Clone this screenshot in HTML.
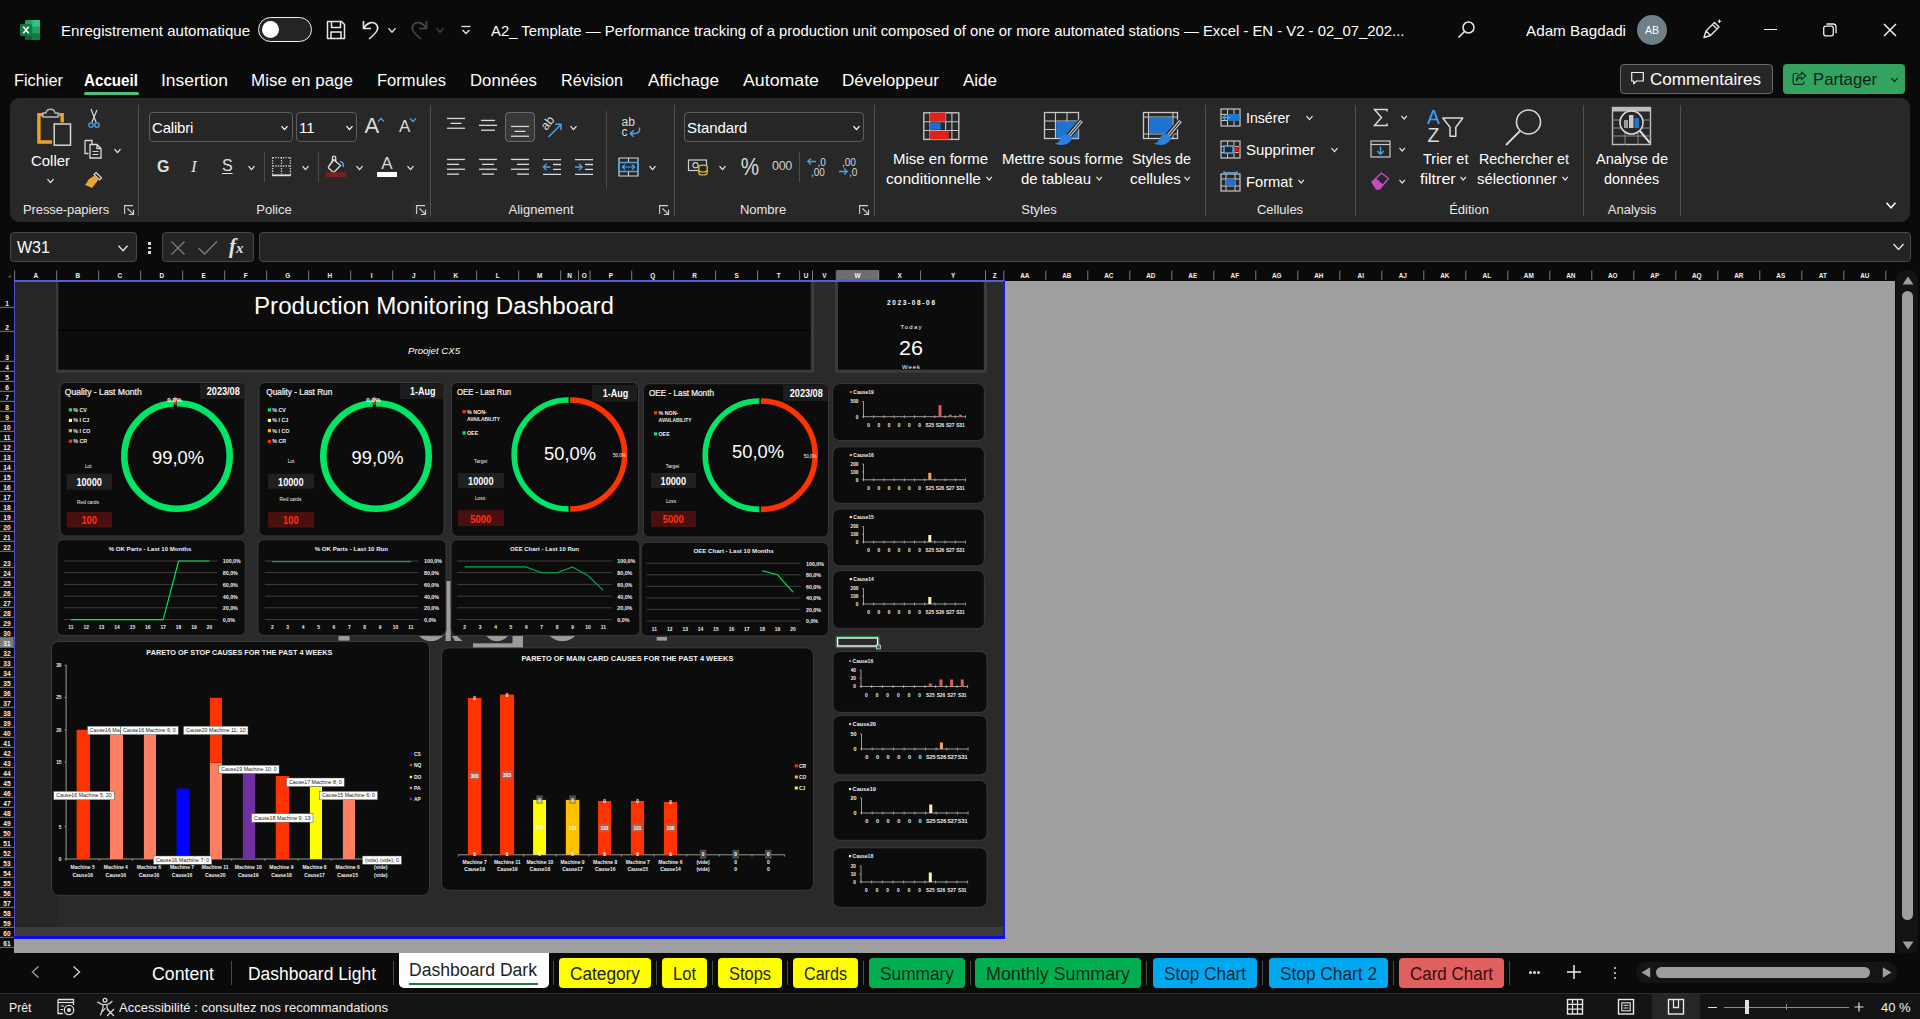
<!DOCTYPE html>
<html lang="fr"><head><meta charset="utf-8"><title>Excel</title>
<style>
html,body{margin:0;padding:0;background:#0a0a0a;overflow:hidden}
body{width:1920px;height:1019px;position:relative;font-family:"Liberation Sans",sans-serif}
.a{position:absolute}
.t{white-space:nowrap;transform-origin:left center}
svg{overflow:visible}
svg text{font-family:"Liberation Sans",sans-serif}
</style></head><body>
<div class="a" style="left:0;top:0;width:1920px;height:100px;background:#0a0a0a"></div>
<svg class="a" style="left:19px;top:19px" width="22" height="22" viewBox="0 0 22 22"><rect x="6" y="1" width="15" height="20" rx="1.5" fill="#21a366"/><rect x="13.5" y="1" width="7.5" height="6.7" fill="#33c481"/><rect x="6" y="7.7" width="7.5" height="6.6" fill="#107c41"/><rect x="13.5" y="7.7" width="7.5" height="6.6" fill="#21a366"/><rect x="6" y="14.3" width="7.5" height="6.7" fill="#185c37"/><rect x="13.5" y="14.3" width="7.5" height="6.7" rx="1" fill="#107c41"/><rect x="1" y="5" width="12" height="12" rx="1.2" fill="#107c41"/><path d="M4.3 7.8 L9.7 14.2 M9.7 7.8 L4.3 14.2" stroke="#fff" stroke-width="1.6"/></svg>
<div class="a t" style="transform:scaleX(1.0030);left:61px;top:15.5px;height:30px;line-height:30px;font-size:15px;color:#fff">Enregistrement automatique</div>
<div class="a" style="left:258px;top:17px;width:54px;height:25px;border-radius:13px;border:1.5px solid #f0f0f0;background:#242424;box-sizing:border-box"></div>
<div class="a" style="left:262px;top:21px;width:17px;height:17px;border-radius:9px;background:#fff"></div>
<svg class="a" style="left:325px;top:19px" width="22" height="22" viewBox="0 0 22 22"><path d="M2.5 2.5 H16.5 L19.5 5.5 V19.5 H2.5 Z" fill="none" stroke="#e8e8e8" stroke-width="1.5" stroke-linejoin="round"/><path d="M6.5 2.5 V8.5 H15.5 V2.5" fill="none" stroke="#e8e8e8" stroke-width="1.5"/><path d="M6 19.5 V13 H16 V19.5" fill="none" stroke="#e8e8e8" stroke-width="1.5"/></svg>
<svg class="a" style="left:360px;top:18px" width="22" height="24" viewBox="0 0 22 24"><path d="M3.5 3 V10.5 H11" fill="none" stroke="#e8e8e8" stroke-width="1.6"/><path d="M3.8 10.2 C7 4.5 13 3 16.2 6.3 C19.5 10 18 13.5 9 21" fill="none" stroke="#e8e8e8" stroke-width="1.6"/></svg>
<svg class="a" style="left:387px;top:26px" width="10" height="8" viewBox="-5 -4 10 8"><path d="M-3.5 -1.7 L0 2.3 L3.5 -1.7" fill="none" stroke="#e0e0e0" stroke-width="1.3"/></svg>
<svg class="a" style="left:408px;top:18px" width="22" height="24" viewBox="0 0 22 24"><path d="M18.5 3 V10.5 H11" fill="none" stroke="#4a4a4a" stroke-width="1.6"/><path d="M18.2 10.2 C15 4.5 9 3 5.800000000000001 6.3 C2.5 10 4 13.5 13 21" fill="none" stroke="#4a4a4a" stroke-width="1.6"/></svg>
<svg class="a" style="left:435px;top:26px" width="10" height="8" viewBox="-5 -4 10 8"><path d="M-3.5 -1.7 L0 2.3 L3.5 -1.7" fill="none" stroke="#4a4a4a" stroke-width="1.3"/></svg>
<svg class="a" style="left:460px;top:24px" width="12" height="12" viewBox="0 0 12 12"><path d="M1.5 2.5 H10.5" stroke="#e8e8e8" stroke-width="1.3"/><path d="M2.5 6 L6 9.5 L9.5 6" fill="none" stroke="#e8e8e8" stroke-width="1.3"/></svg>
<div class="a t" style="transform:scaleX(0.9909);left:491px;top:15.5px;height:30px;line-height:30px;font-size:15px;color:#fff">A2_ Template — Performance tracking of a production unit composed of one or more automated stations — Excel - EN - V2 - 02_07_202...</div>
<svg class="a" style="left:1456px;top:19px" width="22" height="22" viewBox="0 0 22 22"><circle cx="12.5" cy="8.5" r="5.5" fill="none" stroke="#e8e8e8" stroke-width="1.5"/><path d="M8.5 12.5 L2.5 18.5" stroke="#e8e8e8" stroke-width="1.6"/></svg>
<div class="a t" style="transform:scaleX(1.0162);left:1526px;top:15.5px;height:30px;line-height:30px;font-size:15px;color:#fff">Adam Bagdadi</div>
<div class="a" style="left:1637px;top:15px;width:30px;height:30px;border-radius:15px;background:#6e7f88"></div>
<div class="a t" style="left:1632.0px;width:40px;text-align:center;top:20.0px;height:21.0px;line-height:21.0px;font-size:10.5px;color:#fff;">AB</div>
<svg class="a" style="left:1700px;top:18px" width="24" height="24" viewBox="0 0 24 24"><path d="M4 19.5 L6 13 L14.5 4.5 L19 9 L10.5 17.5 Z M6 13 L10.5 17.5 M12.5 6.5 L17 11" fill="none" stroke="#e8e8e8" stroke-width="1.4" stroke-linejoin="round"/><path d="M19.5 1.5 V5 M17.8 3.2 H21.2" stroke="#e8e8e8" stroke-width="1.1"/></svg>
<div class="a" style="left:1763.5px;top:28.8px;width:13px;height:1.3px;background:#f0f0f0"></div>
<svg class="a" style="left:1822px;top:22px" width="16" height="16" viewBox="0 0 16 16"><rect x="1.7" y="4.2" width="9.6" height="9.6" rx="2" fill="none" stroke="#f0f0f0" stroke-width="1.3"/><path d="M4.5 2 H11 Q14 2 14 5 V11.3" fill="none" stroke="#f0f0f0" stroke-width="1.3"/></svg>
<svg class="a" style="left:1882px;top:22px" width="16" height="16" viewBox="0 0 16 16"><path d="M2 2 L14 14 M14 2 L2 14" stroke="#f0f0f0" stroke-width="1.5"/></svg>
<div class="a t" style="transform:scaleX(0.9730);left:14px;top:63.5px;height:34px;line-height:34px;font-size:16.8px;color:#fff;white-space:nowrap">Fichier</div>
<div class="a t" style="transform:scaleX(0.9045);left:84px;top:63.5px;height:34px;line-height:34px;font-size:16.8px;color:#fff;font-weight:bold;white-space:nowrap">Accueil</div>
<div class="a t" style="transform:scaleX(1.0408);left:161px;top:63.5px;height:34px;line-height:34px;font-size:16.8px;color:#fff;white-space:nowrap">Insertion</div>
<div class="a t" style="transform:scaleX(1.0122);left:251px;top:63.5px;height:34px;line-height:34px;font-size:16.8px;color:#fff;white-space:nowrap">Mise en page</div>
<div class="a t" style="transform:scaleX(0.9866);left:377px;top:63.5px;height:34px;line-height:34px;font-size:16.8px;color:#fff;white-space:nowrap">Formules</div>
<div class="a t" style="transform:scaleX(0.9972);left:470px;top:63.5px;height:34px;line-height:34px;font-size:16.8px;color:#fff;white-space:nowrap">Données</div>
<div class="a t" style="transform:scaleX(0.9633);left:561px;top:63.5px;height:34px;line-height:34px;font-size:16.8px;color:#fff;white-space:nowrap">Révision</div>
<div class="a t" style="transform:scaleX(1.0191);left:648px;top:63.5px;height:34px;line-height:34px;font-size:16.8px;color:#fff;white-space:nowrap">Affichage</div>
<div class="a t" style="transform:scaleX(1.0579);left:743px;top:63.5px;height:34px;line-height:34px;font-size:16.8px;color:#fff;white-space:nowrap">Automate</div>
<div class="a t" style="transform:scaleX(1.0192);left:842px;top:63.5px;height:34px;line-height:34px;font-size:16.8px;color:#fff;white-space:nowrap">Développeur</div>
<div class="a t" style="transform:scaleX(1.0121);left:963px;top:63.5px;height:34px;line-height:34px;font-size:16.8px;color:#fff;white-space:nowrap">Aide</div>
<div class="a" style="left:84px;top:92px;width:55px;height:3px;border-radius:1.5px;background:#4fbe7c"></div>
<div class="a" style="left:1620px;top:64px;width:153px;height:30px;border-radius:4px;border:1px solid #6a6a6a;background:#262626;box-sizing:border-box"></div>
<svg class="a" style="left:1630px;top:70px" width="16" height="16" viewBox="0 0 16 16"><path d="M1.7 2.5 H13.3 V11 H6.5 L3.7 13.8 V11 H1.7 Z" fill="none" stroke="#f0f0f0" stroke-width="1.2" stroke-linejoin="round"/></svg>
<div class="a t" style="transform:scaleX(1.0041);left:1650px;top:63px;height:34px;line-height:34px;font-size:17px;color:#fff">Commentaires</div>
<div class="a" style="left:1783px;top:64px;width:122px;height:30px;border-radius:4px;background:#33a35f"></div>
<svg class="a" style="left:1791px;top:70px" width="17" height="17" viewBox="0 0 17 17"><path d="M7 3.5 H3.5 Q2.2 3.5 2.2 4.8 V13 Q2.2 14.3 3.5 14.3 H11.5 Q12.8 14.3 12.8 13 V11.5" fill="none" stroke="#10331f" stroke-width="1.2"/><path d="M10.5 2 L14.8 5.8 L10.5 9.6 V7.3 Q7 7.3 5.5 10.8 Q5.5 4.6 10.5 4.3 Z" fill="none" stroke="#10331f" stroke-width="1.2" stroke-linejoin="round"/></svg>
<div class="a t" style="transform:scaleX(0.9815);left:1813px;top:63px;height:34px;line-height:34px;font-size:17px;color:#0c2416">Partager</div>
<svg class="a" style="left:1889.5px;top:75.5px" width="9.0" height="7.0" viewBox="-4.5 -3.5 9.0 7.0"><path d="M-3.0 -1.45 L0 2.05 L3.0 -1.45" fill="none" stroke="#0c2416" stroke-width="1.3"/></svg>
<div class="a" style="left:10px;top:98px;width:1900px;height:124px;border-radius:9px;background:#282828"></div>
<div class="a" style="left:138px;top:105px;width:1px;height:111px;background:#505050"></div>
<div class="a" style="left:430px;top:105px;width:1px;height:111px;background:#505050"></div>
<div class="a" style="left:673.5px;top:105px;width:1px;height:111px;background:#505050"></div>
<div class="a" style="left:873.5px;top:105px;width:1px;height:111px;background:#505050"></div>
<div class="a" style="left:1205px;top:105px;width:1px;height:111px;background:#505050"></div>
<div class="a" style="left:1355px;top:105px;width:1px;height:111px;background:#505050"></div>
<div class="a" style="left:1583px;top:105px;width:1px;height:111px;background:#505050"></div>
<div class="a" style="left:1680px;top:105px;width:1px;height:111px;background:#505050"></div>
<svg class="a" style="left:33px;top:104px" width="42" height="44" viewBox="0 0 42 44"><path d="M12 10.6 H5.9 V38 H19" fill="none" stroke="#eda02a" stroke-width="3.4"/><path d="M26 10.6 H29.2 V18.5" fill="none" stroke="#eda02a" stroke-width="3.4"/><path d="M10 13 V9 H13 Q13.5 5.2 17.5 5.2 Q21.5 5.2 22 9 H25 V13 Z" fill="#282828" stroke="#b8b8b8" stroke-width="1.4"/><rect x="21.2" y="20" width="16.3" height="21.2" fill="#282828" stroke="#d4d4d4" stroke-width="1.5"/></svg>
<div class="a t" style="transform:scaleX(0.9952);left:31px;top:145.5px;height:30px;line-height:30px;font-size:15px;color:#fff">Coller</div>
<svg class="a" style="left:45.5px;top:176.5px" width="9.0" height="7.0" viewBox="-4.5 -3.5 9.0 7.0"><path d="M-3.0 -1.45 L0 2.05 L3.0 -1.45" fill="none" stroke="#e6e6e6" stroke-width="1.3"/></svg>
<svg class="a" style="left:84px;top:107.5px" width="20" height="22" viewBox="0 0 20 22"><path d="M7 1 L12.2 14.5 M13 2 L7.8 14.5" stroke="#d8d8d8" stroke-width="1.2"/><circle cx="7" cy="17" r="2.2" fill="none" stroke="#4aa3e8" stroke-width="1.3"/><circle cx="13" cy="17" r="2.2" fill="none" stroke="#4aa3e8" stroke-width="1.3"/></svg>
<svg class="a" style="left:83px;top:138px" width="22" height="22" viewBox="0 0 22 22"><path d="M2 2.5 H9 V6 M2 2.5 V15.5 H5.5" fill="none" stroke="#d8d8d8" stroke-width="1.3"/><path d="M7 6.5 H14 L18 10.5 V20 H7 Z M14 6.5 V10.5 H18" fill="none" stroke="#d8d8d8" stroke-width="1.3"/><path d="M9.5 13.5 H15.5 M9.5 16.5 H15.5" stroke="#d8d8d8" stroke-width="1"/></svg>
<svg class="a" style="left:112.5px;top:146.5px" width="9.0" height="7.0" viewBox="-4.5 -3.5 9.0 7.0"><path d="M-3.0 -1.45 L0 2.05 L3.0 -1.45" fill="none" stroke="#e6e6e6" stroke-width="1.3"/></svg>
<svg class="a" style="left:83px;top:170px" width="22" height="22" viewBox="0 0 22 22"><path d="M13 2.5 L18.5 8 L16.5 10 L11 4.5 Z" fill="none" stroke="#d8d8d8" stroke-width="1.2"/><path d="M11.5 6 L15 9.5 L9 17.5 L2.5 14.5 Q5 13 5.5 10 Z" fill="#e8a735" stroke="#e8a735" stroke-width="1" stroke-linejoin="round"/></svg>
<div class="a t pp" style="left:23px;top:196.7px;height:26px;line-height:26px;font-size:13px;color:#e6e6e6;letter-spacing:-0.1px">Presse-papiers</div>
<svg class="a" style="left:124px;top:205px" width="11" height="11" viewBox="0 0 11 11"><path d="M0.6 9 V0.6 H9" fill="none" stroke="#d0d0d0" stroke-width="1.1"/><path d="M3.5 3.5 L9.2 9.2 M9.5 4.8 V9.5 H4.8" fill="none" stroke="#d0d0d0" stroke-width="1.2"/></svg>
<div class="a" style="left:149px;top:112px;width:144px;height:30px;border:1px solid #5e5e5e;border-radius:4px;background:#262626;box-sizing:border-box"></div>
<div class="a t " style="left:152px;top:112.5px;height:30px;line-height:30px;font-size:15px;color:#fff;letter-spacing:-0.2px">Calibri</div>
<svg class="a" style="left:280.0px;top:124.0px" width="9.0" height="7.0" viewBox="-4.5 -3.5 9.0 7.0"><path d="M-3.0 -1.45 L0 2.05 L3.0 -1.45" fill="none" stroke="#fff" stroke-width="1.3"/></svg>
<div class="a" style="left:296px;top:112px;width:61px;height:30px;border:1px solid #5e5e5e;border-radius:4px;background:#262626;box-sizing:border-box"></div>
<div class="a t " style="left:299px;top:112.5px;height:30px;line-height:30px;font-size:15px;color:#fff;">11</div>
<svg class="a" style="left:344.5px;top:124.0px" width="9.0" height="7.0" viewBox="-4.5 -3.5 9.0 7.0"><path d="M-3.0 -1.45 L0 2.05 L3.0 -1.45" fill="none" stroke="#fff" stroke-width="1.3"/></svg>
<div class="a t " style="left:364.5px;top:103.5px;height:44px;line-height:44px;font-size:22px;color:#dcdcdc;">A</div>
<svg class="a" style="left:377px;top:117px" width="8" height="6" viewBox="0 0 8 6"><path d="M1 4.5 L4 1.5 L7 4.5" fill="none" stroke="#4aa3e8" stroke-width="1.3"/></svg>
<div class="a t " style="left:399px;top:110.3px;height:34px;line-height:34px;font-size:17px;color:#dcdcdc;">A</div>
<svg class="a" style="left:409px;top:117px" width="8" height="6" viewBox="0 0 8 6"><path d="M1 1.5 L4 4.5 L7 1.5" fill="none" stroke="#4aa3e8" stroke-width="1.3"/></svg>
<div class="a t " style="left:157px;top:150.5px;height:32px;line-height:32px;font-size:16px;color:#e0e0e0;font-weight:bold">G</div>
<div class="a t " style="left:191px;top:149.5px;height:34px;line-height:34px;font-size:17px;color:#e0e0e0;font-style:italic;font-family:'Liberation Serif',serif">I</div>
<div class="a t " style="left:222px;top:150px;height:32px;line-height:32px;font-size:16px;color:#e0e0e0;text-decoration:underline;text-underline-offset:2px">S</div>
<svg class="a" style="left:246.5px;top:164.0px" width="9.0" height="7.0" viewBox="-4.5 -3.5 9.0 7.0"><path d="M-3.0 -1.45 L0 2.05 L3.0 -1.45" fill="none" stroke="#e6e6e6" stroke-width="1.3"/></svg>
<div class="a" style="left:264px;top:152px;width:1px;height:30px;background:#4c4c4c"></div>
<svg class="a" style="left:271px;top:156px" width="21" height="21" viewBox="0 0 21 21"><path d="M1.6 1.6 H19.4 M1.6 1.6 V18 M19.4 1.6 V18 M10.5 1.6 V18 M1.6 10 H19.4" fill="none" stroke="#d4d4d4" stroke-width="1.3" stroke-dasharray="1.3 1.3"/><path d="M1 19.3 H20" stroke="#e0e0e0" stroke-width="1.8"/></svg>
<svg class="a" style="left:300.5px;top:164.0px" width="9.0" height="7.0" viewBox="-4.5 -3.5 9.0 7.0"><path d="M-3.0 -1.45 L0 2.05 L3.0 -1.45" fill="none" stroke="#e6e6e6" stroke-width="1.3"/></svg>
<div class="a" style="left:318px;top:152px;width:1px;height:30px;background:#4c4c4c"></div>
<svg class="a" style="left:325px;top:154px" width="24" height="24" viewBox="0 0 24 24"><path d="M8.5 5.5 L15.5 11.5 L9.5 17.8 Q8.6 18.6 7.7 17.8 L3.8 14.2 Q3 13.4 3.8 12.5 Z" fill="none" stroke="#dcdcdc" stroke-width="1.4" stroke-linejoin="round"/><path d="M10.7 8 V4.2 Q10.7 2.2 9 2.2 Q7.4 2.2 7.4 4.2 V8.8" fill="none" stroke="#dcdcdc" stroke-width="1.3"/><path d="M15 7.5 Q18.8 7.8 18.3 13.2" fill="none" stroke="#4aa3e8" stroke-width="1.7"/><rect x="1" y="18.3" width="20" height="4.7" fill="#7a2020"/></svg>
<svg class="a" style="left:354.5px;top:164.0px" width="9.0" height="7.0" viewBox="-4.5 -3.5 9.0 7.0"><path d="M-3.0 -1.45 L0 2.05 L3.0 -1.45" fill="none" stroke="#e6e6e6" stroke-width="1.3"/></svg>
<div class="a t " style="left:381.3px;top:147.3px;height:34px;line-height:34px;font-size:17px;color:#dcdcdc;">A</div>
<div class="a" style="left:377px;top:172.3px;width:20px;height:4.7px;background:#fff"></div>
<svg class="a" style="left:405.5px;top:164.0px" width="9.0" height="7.0" viewBox="-4.5 -3.5 9.0 7.0"><path d="M-3.0 -1.45 L0 2.05 L3.0 -1.45" fill="none" stroke="#e6e6e6" stroke-width="1.3"/></svg>
<div class="a t" style="left:224.0px;width:100px;text-align:center;top:196.7px;height:26px;line-height:26px;font-size:13px;color:#e6e6e6;">Police</div>
<div class="a" style="left:412px;top:201px;width:18px;height:18px;border-radius:3px;background:#2e2e2e"></div>
<svg class="a" style="left:416px;top:205px" width="11" height="11" viewBox="0 0 11 11"><path d="M0.6 9 V0.6 H9" fill="none" stroke="#d0d0d0" stroke-width="1.1"/><path d="M3.5 3.5 L9.2 9.2 M9.5 4.8 V9.5 H4.8" fill="none" stroke="#d0d0d0" stroke-width="1.2"/></svg>
<svg class="a" style="left:447.0px;top:114.65px" width="18" height="16.700000000000003" viewBox="0 0 18 16.700000000000003"><path d="M0.0 3.45 H18.0" stroke="#d8d8d8" stroke-width="1.3"/><path d="M3.5 8.350000000000001 H14.5" stroke="#d8d8d8" stroke-width="1.3"/><path d="M0.0 13.25 H18.0" stroke="#d8d8d8" stroke-width="1.3"/></svg>
<svg class="a" style="left:479.0px;top:117.25px" width="18" height="16.700000000000003" viewBox="0 0 18 16.700000000000003"><path d="M2.0 3.45 H16.0" stroke="#d8d8d8" stroke-width="1.3"/><path d="M0.0 8.350000000000001 H18.0" stroke="#d8d8d8" stroke-width="1.3"/><path d="M2.0 13.25 H16.0" stroke="#d8d8d8" stroke-width="1.3"/></svg>
<div class="a" style="left:505px;top:112px;width:30px;height:30px;border:1px solid #6a6a6a;border-radius:4px;background:#383838;box-sizing:border-box"></div>
<svg class="a" style="left:511.0px;top:122.85px" width="18" height="16.700000000000003" viewBox="0 0 18 16.700000000000003"><path d="M0.0 3.45 H18.0" stroke="#d8d8d8" stroke-width="1.3"/><path d="M3.5 8.350000000000001 H14.5" stroke="#d8d8d8" stroke-width="1.3"/><path d="M0.0 13.25 H18.0" stroke="#d8d8d8" stroke-width="1.3"/></svg>
<svg class="a" style="left:540px;top:114px" width="26" height="26" viewBox="0 0 26 26"><text x="0" y="0" font-size="12.5" fill="#dcdcdc" font-family="Liberation Sans" transform="translate(6.5 17) rotate(-52)">ab</text><path d="M8.5 23 L21 10.5 M21 16 V10.3 H15.3" fill="none" stroke="#4aa3e8" stroke-width="1.5"/></svg>
<svg class="a" style="left:568.5px;top:124.0px" width="9.0" height="7.0" viewBox="-4.5 -3.5 9.0 7.0"><path d="M-3.0 -1.45 L0 2.05 L3.0 -1.45" fill="none" stroke="#e6e6e6" stroke-width="1.3"/></svg>
<svg class="a" style="left:620px;top:115px" width="24" height="26" viewBox="0 0 24 26"><text x="1.5" y="11.2" font-size="12" fill="#dcdcdc" font-family="Liberation Sans">ab</text><text x="1.5" y="20.5" font-size="12" fill="#dcdcdc" font-family="Liberation Sans">c</text><path d="M19.5 12.5 Q20.5 18.5 15 18.5 H10.5 M13.7 15.2 L10.3 18.5 L13.7 21.8" fill="none" stroke="#4aa3e8" stroke-width="1.5"/></svg>
<svg class="a" style="left:447.0px;top:156.2px" width="18" height="21.6" viewBox="0 0 18 21.6"><path d="M0 3.45 H18" stroke="#d8d8d8" stroke-width="1.3"/><path d="M0 8.350000000000001 H12" stroke="#d8d8d8" stroke-width="1.3"/><path d="M0 13.25 H18" stroke="#d8d8d8" stroke-width="1.3"/><path d="M0 18.150000000000002 H12" stroke="#d8d8d8" stroke-width="1.3"/></svg>
<svg class="a" style="left:479.0px;top:156.2px" width="18" height="21.6" viewBox="0 0 18 21.6"><path d="M0.0 3.45 H18.0" stroke="#d8d8d8" stroke-width="1.3"/><path d="M3.0 8.350000000000001 H15.0" stroke="#d8d8d8" stroke-width="1.3"/><path d="M0.0 13.25 H18.0" stroke="#d8d8d8" stroke-width="1.3"/><path d="M3.0 18.150000000000002 H15.0" stroke="#d8d8d8" stroke-width="1.3"/></svg>
<svg class="a" style="left:511.0px;top:156.2px" width="18" height="21.6" viewBox="0 0 18 21.6"><path d="M0 3.45 H18" stroke="#d8d8d8" stroke-width="1.3"/><path d="M6 8.350000000000001 H18" stroke="#d8d8d8" stroke-width="1.3"/><path d="M0 13.25 H18" stroke="#d8d8d8" stroke-width="1.3"/><path d="M6 18.150000000000002 H18" stroke="#d8d8d8" stroke-width="1.3"/></svg>
<svg class="a" style="left:542px;top:157px" width="20" height="20" viewBox="0 0 20 20"><path d="M1 2.6 H19 M11 7.5 H19 M11 12.4 H19 M1 17.3 H19" stroke="#d8d8d8" stroke-width="1.3"/><path d="M8.5 10 H1.5 M4.5 6.8 L1.3 10 L4.5 13.2" fill="none" stroke="#4aa3e8" stroke-width="1.3"/></svg>
<svg class="a" style="left:574px;top:157px" width="20" height="20" viewBox="0 0 20 20"><path d="M1 2.6 H19 M11 7.5 H19 M11 12.4 H19 M1 17.3 H19" stroke="#d8d8d8" stroke-width="1.3"/><path d="M1 10 H8 M5 6.8 L8.2 10 L5 13.2" fill="none" stroke="#4aa3e8" stroke-width="1.3"/></svg>
<div class="a" style="left:606px;top:111px;width:1px;height:78px;background:#4c4c4c"></div>
<svg class="a" style="left:618px;top:157px" width="21" height="20" viewBox="0 0 21 20"><path d="M1 1 H20 V19 H1 Z" fill="none" stroke="#d8d8d8" stroke-width="1.2"/><rect x="1" y="5.5" width="19" height="9" fill="none" stroke="#4aa3e8" stroke-width="1.5"/><path d="M4.5 10 H16.5 M7 7.5 L4.3 10 L7 12.5 M14 7.5 L16.7 10 L14 12.5" fill="none" stroke="#4aa3e8" stroke-width="1.2"/><path d="M10.5 1 V5 M10.5 15 V19" stroke="#d8d8d8" stroke-width="1"/></svg>
<svg class="a" style="left:647.5px;top:164.0px" width="9.0" height="7.0" viewBox="-4.5 -3.5 9.0 7.0"><path d="M-3.0 -1.45 L0 2.05 L3.0 -1.45" fill="none" stroke="#e6e6e6" stroke-width="1.3"/></svg>
<div class="a t" style="left:481.0px;width:120px;text-align:center;top:196.7px;height:26px;line-height:26px;font-size:13px;color:#e6e6e6;">Alignement</div>
<svg class="a" style="left:659px;top:205px" width="11" height="11" viewBox="0 0 11 11"><path d="M0.6 9 V0.6 H9" fill="none" stroke="#d0d0d0" stroke-width="1.1"/><path d="M3.5 3.5 L9.2 9.2 M9.5 4.8 V9.5 H4.8" fill="none" stroke="#d0d0d0" stroke-width="1.2"/></svg>
<div class="a" style="left:684px;top:112px;width:180px;height:30px;border:1px solid #5e5e5e;border-radius:4px;background:#262626;box-sizing:border-box"></div>
<div class="a t " style="left:687px;top:112.5px;height:30px;line-height:30px;font-size:15px;color:#fff;letter-spacing:-0.1px">Standard</div>
<svg class="a" style="left:851.5px;top:124.0px" width="9.0" height="7.0" viewBox="-4.5 -3.5 9.0 7.0"><path d="M-3.0 -1.45 L0 2.05 L3.0 -1.45" fill="none" stroke="#fff" stroke-width="1.3"/></svg>
<svg class="a" style="left:687px;top:157px" width="24" height="20" viewBox="0 0 24 20"><rect x="1.5" y="3" width="18" height="10.5" fill="none" stroke="#cfcfcf" stroke-width="1.2"/><circle cx="8.5" cy="8.2" r="2.6" fill="none" stroke="#cfcfcf" stroke-width="1.1"/><ellipse cx="16" cy="10" rx="4.2" ry="1.8" fill="#282828" stroke="#e8c23a" stroke-width="1.2"/><path d="M11.8 10 V16 Q11.8 18 16 18 Q20.2 18 20.2 16 V10" fill="#282828" stroke="#e8c23a" stroke-width="1.2"/><path d="M11.8 13 Q11.8 15 16 15 Q20.2 15 20.2 13" fill="none" stroke="#e8c23a" stroke-width="1.1"/></svg>
<svg class="a" style="left:717.5px;top:164.0px" width="9.0" height="7.0" viewBox="-4.5 -3.5 9.0 7.0"><path d="M-3.0 -1.45 L0 2.05 L3.0 -1.45" fill="none" stroke="#e6e6e6" stroke-width="1.3"/></svg>
<div class="a t" style="left:730.0px;width:40px;text-align:center;top:143.5px;height:47.0px;line-height:47.0px;font-size:23.5px;color:#d8d8d8;transform:scaleX(0.88);transform-origin:center">%</div>
<div class="a t" style="left:762.0px;width:40px;text-align:center;top:154.0px;height:25.0px;line-height:25.0px;font-size:12.5px;color:#d0d0d0;letter-spacing:-0.3px">000</div>
<div class="a" style="left:799px;top:152px;width:1px;height:30px;background:#4c4c4c"></div>
<svg class="a" style="left:805px;top:155px" width="26" height="24" viewBox="0 0 26 24"><path d="M3 6.5 H11 M5.8 3.5 L2.8 6.5 L5.8 9.5" fill="none" stroke="#4aa3e8" stroke-width="1.3"/><text x="12.5" y="10.5" font-size="10" fill="#d8d8d8" font-family="Liberation Sans">,0</text><text x="6" y="21" font-size="10" fill="#d8d8d8" font-family="Liberation Sans">,00</text></svg>
<svg class="a" style="left:836px;top:155px" width="26" height="24" viewBox="0 0 26 24"><text x="6" y="10.5" font-size="10" fill="#d8d8d8" font-family="Liberation Sans">,00</text><path d="M3 16.5 H11 M8.2 13.5 L11.2 16.5 L8.2 19.5" fill="none" stroke="#4aa3e8" stroke-width="1.3"/><text x="13" y="21" font-size="10" fill="#d8d8d8" font-family="Liberation Sans">,0</text></svg>
<div class="a t" style="left:713.0px;width:100px;text-align:center;top:196.7px;height:26px;line-height:26px;font-size:13px;color:#e6e6e6;">Nombre</div>
<svg class="a" style="left:859px;top:205px" width="11" height="11" viewBox="0 0 11 11"><path d="M0.6 9 V0.6 H9" fill="none" stroke="#d0d0d0" stroke-width="1.1"/><path d="M3.5 3.5 L9.2 9.2 M9.5 4.8 V9.5 H4.8" fill="none" stroke="#d0d0d0" stroke-width="1.2"/></svg>
<svg class="a" style="left:922px;top:111px" width="38" height="30" viewBox="0 0 38 30"><rect x="1.8" y="1.8" width="35" height="26.6" fill="none" stroke="#c4c4c4" stroke-width="1.4"/><path d="M1.8 10.8 H36.8 M1.8 19.5 H36.8 M8 1.8 V28.4 M23.6 1.8 V28.4 M29.9 1.8 V28.4" stroke="#c4c4c4" stroke-width="1.1"/><rect x="8" y="1.6" width="15.6" height="9" fill="#de2218"/><rect x="8" y="11.6" width="10.6" height="7.2" fill="#1b6dd0"/><rect x="8" y="19.8" width="18.7" height="8.7" fill="#de2218"/></svg>
<div class="a t" style="transform:scaleX(0.9995);left:893px;top:144px;height:30px;line-height:30px;font-size:15px;color:#fff">Mise en forme</div>
<div class="a t" style="transform:scaleX(1.0354);left:886px;top:164px;height:30px;line-height:30px;font-size:15px;color:#fff">conditionnelle</div>
<svg class="a" style="left:984.8px;top:175.3px" width="8.4" height="6.4" viewBox="-4.2 -3.2 8.4 6.4"><path d="M-2.7 -1.3 L0 1.9000000000000001 L2.7 -1.3" fill="none" stroke="#e6e6e6" stroke-width="1.3"/></svg>
<svg class="a" style="left:1043px;top:110px" width="42" height="36" viewBox="0 0 42 36"><rect x="1.5" y="2.5" width="34" height="26" fill="none" stroke="#c8c8c8" stroke-width="1.3"/><path d="M1.5 11 H35.5 M1.5 19.5 H35.5 M12.5 2.5 V28.5 M24 2.5 V28.5" stroke="#c8c8c8" stroke-width="1.1"/><rect x="13.2" y="11.6" width="22" height="16.5" fill="#1f72d0"/><path d="M38.5 11 L25 27" stroke="#282828" stroke-width="6"/><path d="M38.5 11 L26 26" stroke="#d8d8d8" stroke-width="3.4"/><path d="M38 11.6 L26.5 25.4" stroke="#282828" stroke-width="1.2"/><path d="M25.5 24.5 Q18.5 23.5 17 30 Q14.5 33.5 11.5 33.5 Q22 37.5 27.5 31 Q29.5 28 28.5 26.5 Z" fill="#2b7fe0"/></svg>
<div class="a t" style="transform:scaleX(1.0010);left:1002px;top:144px;height:30px;line-height:30px;font-size:15px;color:#fff">Mettre sous forme</div>
<div class="a t" style="transform:scaleX(0.9989);left:1020.5px;top:164px;height:30px;line-height:30px;font-size:15px;color:#fff">de tableau</div>
<svg class="a" style="left:1094.8px;top:175.3px" width="8.4" height="6.4" viewBox="-4.2 -3.2 8.4 6.4"><path d="M-2.7 -1.3 L0 1.9000000000000001 L2.7 -1.3" fill="none" stroke="#e6e6e6" stroke-width="1.3"/></svg>
<svg class="a" style="left:1142px;top:110px" width="42" height="36" viewBox="0 0 42 36"><rect x="1.5" y="2.5" width="34" height="26" fill="none" stroke="#c8c8c8" stroke-width="1.3"/><path d="M1.5 7 H35.5 M1.5 24 H35.5 M6.5 2.5 V28.5 M31 2.5 V28.5" stroke="#c8c8c8" stroke-width="1.1"/><rect x="7.2" y="7.7" width="23" height="15.6" fill="#1f72d0"/><path d="M38.5 11 L25 27" stroke="#282828" stroke-width="6"/><path d="M38.5 11 L26 26" stroke="#d8d8d8" stroke-width="3.4"/><path d="M38 11.6 L26.5 25.4" stroke="#282828" stroke-width="1.2"/><path d="M25.5 24.5 Q18.5 23.5 17 30 Q14.5 33.5 11.5 33.5 Q22 37.5 27.5 31 Q29.5 28 28.5 26.5 Z" fill="#2b7fe0"/></svg>
<div class="a t" style="transform:scaleX(0.9562);left:1132px;top:144px;height:30px;line-height:30px;font-size:15px;color:#fff">Styles de</div>
<div class="a t" style="transform:scaleX(1.0194);left:1130px;top:164px;height:30px;line-height:30px;font-size:15px;color:#fff">cellules</div>
<svg class="a" style="left:1182.8px;top:175.3px" width="8.4" height="6.4" viewBox="-4.2 -3.2 8.4 6.4"><path d="M-2.7 -1.3 L0 1.9000000000000001 L2.7 -1.3" fill="none" stroke="#e6e6e6" stroke-width="1.3"/></svg>
<div class="a t" style="left:989.0px;width:100px;text-align:center;top:197.2px;height:26px;line-height:26px;font-size:13px;color:#e6e6e6;">Styles</div>
<svg class="a" style="left:1220px;top:108px" width="21" height="19" viewBox="0 0 21 19"><rect x="1" y="1" width="19" height="17" fill="none" stroke="#c8c8c8" stroke-width="1.2"/><path d="M1 6.5 H20 M1 12.5 H20 M7.5 1 V18 M14 1 V18" stroke="#c8c8c8" stroke-width="1"/><rect x="7.5" y="6" width="12" height="7" fill="#1f72d0"/><path d="M10.5 9.5 H3 M5.5 7 L3 9.5 L5.5 12" fill="none" stroke="#4aa3e8" stroke-width="1.3"/></svg>
<div class="a t" style="transform:scaleX(0.9424);left:1246px;top:103px;height:30px;line-height:30px;font-size:15px;color:#fff">Insérer</div>
<svg class="a" style="left:1304.5px;top:114.0px" width="9.0" height="7.0" viewBox="-4.5 -3.5 9.0 7.0"><path d="M-3.0 -1.45 L0 2.05 L3.0 -1.45" fill="none" stroke="#e6e6e6" stroke-width="1.3"/></svg>
<svg class="a" style="left:1220px;top:140px" width="21" height="19" viewBox="0 0 21 19"><rect x="1" y="1" width="19" height="17" fill="none" stroke="#c8c8c8" stroke-width="1.2"/><path d="M1 6.5 H20 M1 12.5 H20 M7.5 1 V18 M14 1 V18" stroke="#c8c8c8" stroke-width="1"/><rect x="4" y="6" width="9" height="7" fill="#282828" stroke="#4aa3e8" stroke-width="1.6"/><path d="M14 6.5 L19.5 12.5 M19.5 6.5 L14 12.5" stroke="#e0221c" stroke-width="1.5"/></svg>
<div class="a t" style="transform:scaleX(0.9971);left:1246px;top:135px;height:30px;line-height:30px;font-size:15px;color:#fff">Supprimer</div>
<svg class="a" style="left:1329.5px;top:146.0px" width="9.0" height="7.0" viewBox="-4.5 -3.5 9.0 7.0"><path d="M-3.0 -1.45 L0 2.05 L3.0 -1.45" fill="none" stroke="#e6e6e6" stroke-width="1.3"/></svg>
<svg class="a" style="left:1220px;top:171px" width="21" height="21" viewBox="0 0 21 21"><rect x="1" y="3" width="19" height="17" fill="none" stroke="#c8c8c8" stroke-width="1.2"/><path d="M1 8 H20 M1 15 H20 M6 3 V20 M15 3 V20" stroke="#c8c8c8" stroke-width="1"/><rect x="6" y="8" width="9" height="7" fill="#1f72d0"/><path d="M4 1.5 H17 M4 0 V3 M17 0 V3" stroke="#4aa3e8" stroke-width="1.2"/></svg>
<div class="a t" style="transform:scaleX(0.9786);left:1246px;top:167px;height:30px;line-height:30px;font-size:15px;color:#fff">Format</div>
<svg class="a" style="left:1296.8px;top:178.3px" width="8.4" height="6.4" viewBox="-4.2 -3.2 8.4 6.4"><path d="M-2.7 -1.3 L0 1.9000000000000001 L2.7 -1.3" fill="none" stroke="#e6e6e6" stroke-width="1.3"/></svg>
<div class="a t" style="left:1230.0px;width:100px;text-align:center;top:197.2px;height:26px;line-height:26px;font-size:13px;color:#e6e6e6;">Cellules</div>
<svg class="a" style="left:1372px;top:108px" width="18" height="19" viewBox="0 0 18 19"><path d="M15 3.5 V1.5 H2.5 L9.5 9.5 L2.5 17.5 H15 V15.5" fill="none" stroke="#d8d8d8" stroke-width="1.5" stroke-linejoin="miter"/></svg>
<svg class="a" style="left:1399.8px;top:114.3px" width="8.4" height="6.4" viewBox="-4.2 -3.2 8.4 6.4"><path d="M-2.7 -1.3 L0 1.9000000000000001 L2.7 -1.3" fill="none" stroke="#e6e6e6" stroke-width="1.3"/></svg>
<svg class="a" style="left:1370px;top:140px" width="22" height="19" viewBox="0 0 22 19"><rect x="1" y="1" width="19" height="16" fill="none" stroke="#c8c8c8" stroke-width="1.2"/><path d="M1 4.5 H20" stroke="#c8c8c8" stroke-width="1.2"/><path d="M10.5 6.5 V14 M7.3 11 L10.5 14.2 L13.7 11" fill="none" stroke="#4aa3e8" stroke-width="1.4"/></svg>
<svg class="a" style="left:1397.8px;top:146.3px" width="8.4" height="6.4" viewBox="-4.2 -3.2 8.4 6.4"><path d="M-2.7 -1.3 L0 1.9000000000000001 L2.7 -1.3" fill="none" stroke="#e6e6e6" stroke-width="1.3"/></svg>
<svg class="a" style="left:1370px;top:171px" width="22" height="20" viewBox="0 0 22 20"><path d="M2 11 L11.5 2 L18.5 7.5 L9.5 18 H6.5 Z" fill="none" stroke="#c24fc2" stroke-width="1.4" stroke-linejoin="round"/><path d="M2 11 L6.5 18 H9.5 L13 13.5 L6 7.3 Z" fill="#c24fc2"/></svg>
<svg class="a" style="left:1397.8px;top:178.3px" width="8.4" height="6.4" viewBox="-4.2 -3.2 8.4 6.4"><path d="M-2.7 -1.3 L0 1.9000000000000001 L2.7 -1.3" fill="none" stroke="#e6e6e6" stroke-width="1.3"/></svg>
<svg class="a" style="left:1425px;top:108px" width="42" height="42" viewBox="0 0 42 42"><text x="2" y="16.3" font-size="19.5" fill="#3f9ff0" font-family="Liberation Sans">A</text><text x="2.6" y="34.3" font-size="19.5" fill="#d8d8d8" font-family="Liberation Sans">Z</text><path d="M17.8 10 H37.8 L30.8 19.2 V28.3 H25 V19.2 Z" fill="none" stroke="#d8d8d8" stroke-width="1.5" stroke-linejoin="round"/></svg>
<div class="a t" style="transform:scaleX(0.9691);left:1422.5px;top:144px;height:30px;line-height:30px;font-size:15px;color:#fff">Trier et</div>
<div class="a t" style="transform:scaleX(1.0707);left:1420px;top:164px;height:30px;line-height:30px;font-size:15px;color:#fff">filtrer</div>
<svg class="a" style="left:1458.8px;top:175.3px" width="8.4" height="6.4" viewBox="-4.2 -3.2 8.4 6.4"><path d="M-2.7 -1.3 L0 1.9000000000000001 L2.7 -1.3" fill="none" stroke="#e6e6e6" stroke-width="1.3"/></svg>
<svg class="a" style="left:1503px;top:106px" width="42" height="42" viewBox="0 0 42 42"><circle cx="25.5" cy="16" r="12" fill="none" stroke="#d8d8d8" stroke-width="1.6"/><path d="M17 25 L3 39" stroke="#d8d8d8" stroke-width="1.8"/></svg>
<div class="a t" style="transform:scaleX(0.9552);left:1479px;top:144px;height:30px;line-height:30px;font-size:15px;color:#fff">Rechercher et</div>
<div class="a t" style="transform:scaleX(0.9890);left:1477px;top:164px;height:30px;line-height:30px;font-size:15px;color:#fff">sélectionner</div>
<svg class="a" style="left:1560.8px;top:175.3px" width="8.4" height="6.4" viewBox="-4.2 -3.2 8.4 6.4"><path d="M-2.7 -1.3 L0 1.9000000000000001 L2.7 -1.3" fill="none" stroke="#e6e6e6" stroke-width="1.3"/></svg>
<div class="a t" style="left:1419.0px;width:100px;text-align:center;top:197.2px;height:26px;line-height:26px;font-size:13px;color:#e6e6e6;">Édition</div>
<svg class="a" style="left:1611px;top:105px" width="42" height="42" viewBox="0 0 42 42"><rect x="1.5" y="2.5" width="38" height="37" fill="none" stroke="#bdbdbd" stroke-width="1.4"/><rect x="1.5" y="2.5" width="38" height="4" fill="#bdbdbd"/><path d="M1.5 15 H40 M1.5 23 H40 M1.5 31 H40 M14 6 V40 M27 6 V40" stroke="#8a8a8a" stroke-width="1"/><circle cx="20.5" cy="17.5" r="11.5" fill="#282828" stroke="#d8d8d8" stroke-width="1.6"/><path d="M29 26 L39 38" stroke="#d8d8d8" stroke-width="2"/><rect x="13" y="15" width="4" height="8" fill="#9a9a9a"/><rect x="18" y="10" width="4.5" height="13" fill="#c8c8c8"/><rect x="23.5" y="13" width="4.5" height="10" fill="#1f72d0"/></svg>
<div class="a t" style="transform:scaleX(0.9701);left:1596px;top:144px;height:30px;line-height:30px;font-size:15px;color:#fff">Analyse de</div>
<div class="a t" style="transform:scaleX(0.9590);left:1604.4px;top:164px;height:30px;line-height:30px;font-size:15px;color:#fff">données</div>
<div class="a t" style="left:1582.0px;width:100px;text-align:center;top:197.2px;height:26px;line-height:26px;font-size:13px;color:#e6e6e6;">Analysis</div>
<svg class="a" style="left:1885px;top:199.5px" width="12" height="10" viewBox="-6 -5 12 10"><path d="M-4.5 -2.2 L0 2.8 L4.5 -2.2" fill="none" stroke="#fff" stroke-width="1.5"/></svg>
<div class="a" style="left:0;top:222px;width:1920px;height:59px;background:#0a0a0a"></div>
<div class="a" style="left:10px;top:232px;width:127px;height:30px;border:1px solid #484848;border-radius:4px;background:#242424;box-sizing:border-box"></div>
<div class="a t " style="left:17px;top:232.3px;height:32px;line-height:32px;font-size:16px;color:#fff;">W31</div>
<svg class="a" style="left:117px;top:243px" width="12" height="10" viewBox="-6 -5 12 10"><path d="M-4.5 -2.2 L0 2.8 L4.5 -2.2" fill="none" stroke="#e0e0e0" stroke-width="1.4"/></svg>
<div class="a" style="left:148px;top:242.2px;width:2.8px;height:2.8px;background:#d8d8d8"></div>
<div class="a" style="left:148px;top:246.6px;width:2.8px;height:2.8px;background:#d8d8d8"></div>
<div class="a" style="left:148px;top:251.0px;width:2.8px;height:2.8px;background:#d8d8d8"></div>
<div class="a" style="left:162px;top:232px;width:92px;height:30px;border:1px solid #484848;border-radius:4px;background:#242424;box-sizing:border-box"></div>
<svg class="a" style="left:170px;top:240px" width="16" height="16" viewBox="0 0 16 16"><path d="M1.5 1.5 L14.5 14.5 M14.5 1.5 L1.5 14.5" stroke="#7a7a7a" stroke-width="1.4"/></svg>
<svg class="a" style="left:197px;top:240px" width="22" height="16" viewBox="0 0 22 16"><path d="M1.5 8 L7.5 14 L20 1.5" fill="none" stroke="#7a7a7a" stroke-width="1.4"/></svg>
<div class="a t " style="left:229px;top:225px;height:42px;line-height:42px;font-size:21px;color:#e0e0e0;font-family:'Liberation Serif',serif;font-weight:bold"><i>f</i><i style="font-size:15px">x</i></div>
<div class="a" style="left:259px;top:232px;width:1652px;height:30px;border:1px solid #484848;border-radius:4px;background:#242424;box-sizing:border-box"></div>
<svg class="a" style="left:1891.5px;top:240.5px" width="13.0" height="11.0" viewBox="-6.5 -5.5 13.0 11.0"><path d="M-5.0 -2.45 L0 3.05 L5.0 -2.45" fill="none" stroke="#e0e0e0" stroke-width="1.4"/></svg>
<div class="a" style="left:0;top:281px;width:1920px;height:672px;background:#a0a0a0"></div>
<div class="a" style="left:15px;top:281px;width:989px;height:656px;background:#2a2a2a"></div>
<div class="a" style="left:15px;top:281px;width:41.5px;height:656px;background:#262626"></div>
<div class="a" style="left:15px;top:927px;width:989px;height:9px;background:#3b3b3b"></div>
<div class="a" style="left:0;top:266px;width:1920px;height:14.5px;background:#0a0a0a"></div>
<svg font-family="Liberation Sans" class="a" style="left:0px;top:0px" width="1920" height="282" viewBox="0 0 1920 282"><path d="M56.7 270.5 V280" stroke="#9a9a9a" stroke-width="0.8"/><text x="35.7" y="278" font-size="6.4" fill="#f2f2f2" text-anchor="middle" font-weight="bold" >A</text><path d="M98.7 270.5 V280" stroke="#9a9a9a" stroke-width="0.8"/><text x="77.7" y="278" font-size="6.4" fill="#f2f2f2" text-anchor="middle" font-weight="bold" >B</text><path d="M140.7 270.5 V280" stroke="#9a9a9a" stroke-width="0.8"/><text x="119.69999999999999" y="278" font-size="6.4" fill="#f2f2f2" text-anchor="middle" font-weight="bold" >C</text><path d="M182.7 270.5 V280" stroke="#9a9a9a" stroke-width="0.8"/><text x="161.7" y="278" font-size="6.4" fill="#f2f2f2" text-anchor="middle" font-weight="bold" >D</text><path d="M224.7 270.5 V280" stroke="#9a9a9a" stroke-width="0.8"/><text x="203.7" y="278" font-size="6.4" fill="#f2f2f2" text-anchor="middle" font-weight="bold" >E</text><path d="M266.7 270.5 V280" stroke="#9a9a9a" stroke-width="0.8"/><text x="245.7" y="278" font-size="6.4" fill="#f2f2f2" text-anchor="middle" font-weight="bold" >F</text><path d="M308.7 270.5 V280" stroke="#9a9a9a" stroke-width="0.8"/><text x="287.7" y="278" font-size="6.4" fill="#f2f2f2" text-anchor="middle" font-weight="bold" >G</text><path d="M350.7 270.5 V280" stroke="#9a9a9a" stroke-width="0.8"/><text x="329.7" y="278" font-size="6.4" fill="#f2f2f2" text-anchor="middle" font-weight="bold" >H</text><path d="M392.7 270.5 V280" stroke="#9a9a9a" stroke-width="0.8"/><text x="371.7" y="278" font-size="6.4" fill="#f2f2f2" text-anchor="middle" font-weight="bold" >I</text><path d="M434.7 270.5 V280" stroke="#9a9a9a" stroke-width="0.8"/><text x="413.7" y="278" font-size="6.4" fill="#f2f2f2" text-anchor="middle" font-weight="bold" >J</text><path d="M476.7 270.5 V280" stroke="#9a9a9a" stroke-width="0.8"/><text x="455.7" y="278" font-size="6.4" fill="#f2f2f2" text-anchor="middle" font-weight="bold" >K</text><path d="M518.7 270.5 V280" stroke="#9a9a9a" stroke-width="0.8"/><text x="497.70000000000005" y="278" font-size="6.4" fill="#f2f2f2" text-anchor="middle" font-weight="bold" >L</text><path d="M560.7 270.5 V280" stroke="#9a9a9a" stroke-width="0.8"/><text x="539.7" y="278" font-size="6.4" fill="#f2f2f2" text-anchor="middle" font-weight="bold" >M</text><path d="M578.5 270.5 V280" stroke="#9a9a9a" stroke-width="0.8"/><text x="569.6" y="278" font-size="6.4" fill="#f2f2f2" text-anchor="middle" font-weight="bold" >N</text><path d="M590 270.5 V280" stroke="#9a9a9a" stroke-width="0.8"/><text x="584.25" y="278" font-size="6.4" fill="#f2f2f2" text-anchor="middle" font-weight="bold" >O</text><path d="M631.7 270.5 V280" stroke="#9a9a9a" stroke-width="0.8"/><text x="610.85" y="278" font-size="6.4" fill="#f2f2f2" text-anchor="middle" font-weight="bold" >P</text><path d="M673.7 270.5 V280" stroke="#9a9a9a" stroke-width="0.8"/><text x="652.7" y="278" font-size="6.4" fill="#f2f2f2" text-anchor="middle" font-weight="bold" >Q</text><path d="M715.6 270.5 V280" stroke="#9a9a9a" stroke-width="0.8"/><text x="694.6500000000001" y="278" font-size="6.4" fill="#f2f2f2" text-anchor="middle" font-weight="bold" >R</text><path d="M757.6 270.5 V280" stroke="#9a9a9a" stroke-width="0.8"/><text x="736.6" y="278" font-size="6.4" fill="#f2f2f2" text-anchor="middle" font-weight="bold" >S</text><path d="M799.6 270.5 V280" stroke="#9a9a9a" stroke-width="0.8"/><text x="778.6" y="278" font-size="6.4" fill="#f2f2f2" text-anchor="middle" font-weight="bold" >T</text><path d="M812.5 270.5 V280" stroke="#9a9a9a" stroke-width="0.8"/><text x="806.05" y="278" font-size="6.4" fill="#f2f2f2" text-anchor="middle" font-weight="bold" >U</text><path d="M836.3 270.5 V280" stroke="#9a9a9a" stroke-width="0.8"/><text x="824.4" y="278" font-size="6.4" fill="#f2f2f2" text-anchor="middle" font-weight="bold" >V</text><rect x="836.8" y="270" width="41.90000000000009" height="10" fill="#6e6e6e"/><rect x="836.3" y="279.6" width="42.40000000000009" height="1.6" fill="#1e7a46"/><path d="M878.7 270.5 V280" stroke="#9a9a9a" stroke-width="0.8"/><text x="857.5" y="278" font-size="6.4" fill="#f2f2f2" text-anchor="middle" font-weight="bold" >W</text><path d="M920.6 270.5 V280" stroke="#9a9a9a" stroke-width="0.8"/><text x="899.6500000000001" y="278" font-size="6.4" fill="#f2f2f2" text-anchor="middle" font-weight="bold" >X</text><path d="M985.5 270.5 V280" stroke="#9a9a9a" stroke-width="0.8"/><text x="953.05" y="278" font-size="6.4" fill="#f2f2f2" text-anchor="middle" font-weight="bold" >Y</text><path d="M1003.8 270.5 V280" stroke="#9a9a9a" stroke-width="0.8"/><text x="994.65" y="278" font-size="6.4" fill="#f2f2f2" text-anchor="middle" font-weight="bold" >Z</text><path d="M1045.8 270.5 V280" stroke="#9a9a9a" stroke-width="0.8"/><text x="1024.8" y="278" font-size="6.4" fill="#f2f2f2" text-anchor="middle" font-weight="bold" >AA</text><path d="M1087.8 270.5 V280" stroke="#9a9a9a" stroke-width="0.8"/><text x="1066.8" y="278" font-size="6.4" fill="#f2f2f2" text-anchor="middle" font-weight="bold" >AB</text><path d="M1129.8 270.5 V280" stroke="#9a9a9a" stroke-width="0.8"/><text x="1108.8" y="278" font-size="6.4" fill="#f2f2f2" text-anchor="middle" font-weight="bold" >AC</text><path d="M1171.8 270.5 V280" stroke="#9a9a9a" stroke-width="0.8"/><text x="1150.8" y="278" font-size="6.4" fill="#f2f2f2" text-anchor="middle" font-weight="bold" >AD</text><path d="M1213.8 270.5 V280" stroke="#9a9a9a" stroke-width="0.8"/><text x="1192.8" y="278" font-size="6.4" fill="#f2f2f2" text-anchor="middle" font-weight="bold" >AE</text><path d="M1255.8 270.5 V280" stroke="#9a9a9a" stroke-width="0.8"/><text x="1234.8" y="278" font-size="6.4" fill="#f2f2f2" text-anchor="middle" font-weight="bold" >AF</text><path d="M1297.8 270.5 V280" stroke="#9a9a9a" stroke-width="0.8"/><text x="1276.8" y="278" font-size="6.4" fill="#f2f2f2" text-anchor="middle" font-weight="bold" >AG</text><path d="M1339.8 270.5 V280" stroke="#9a9a9a" stroke-width="0.8"/><text x="1318.8" y="278" font-size="6.4" fill="#f2f2f2" text-anchor="middle" font-weight="bold" >AH</text><path d="M1381.8 270.5 V280" stroke="#9a9a9a" stroke-width="0.8"/><text x="1360.8" y="278" font-size="6.4" fill="#f2f2f2" text-anchor="middle" font-weight="bold" >AI</text><path d="M1423.8 270.5 V280" stroke="#9a9a9a" stroke-width="0.8"/><text x="1402.8" y="278" font-size="6.4" fill="#f2f2f2" text-anchor="middle" font-weight="bold" >AJ</text><path d="M1465.8 270.5 V280" stroke="#9a9a9a" stroke-width="0.8"/><text x="1444.8" y="278" font-size="6.4" fill="#f2f2f2" text-anchor="middle" font-weight="bold" >AK</text><path d="M1507.8 270.5 V280" stroke="#9a9a9a" stroke-width="0.8"/><text x="1486.8" y="278" font-size="6.4" fill="#f2f2f2" text-anchor="middle" font-weight="bold" >AL</text><path d="M1549.8 270.5 V280" stroke="#9a9a9a" stroke-width="0.8"/><text x="1528.8" y="278" font-size="6.4" fill="#f2f2f2" text-anchor="middle" font-weight="bold" >AM</text><path d="M1591.8 270.5 V280" stroke="#9a9a9a" stroke-width="0.8"/><text x="1570.8" y="278" font-size="6.4" fill="#f2f2f2" text-anchor="middle" font-weight="bold" >AN</text><path d="M1633.8 270.5 V280" stroke="#9a9a9a" stroke-width="0.8"/><text x="1612.8" y="278" font-size="6.4" fill="#f2f2f2" text-anchor="middle" font-weight="bold" >AO</text><path d="M1675.8 270.5 V280" stroke="#9a9a9a" stroke-width="0.8"/><text x="1654.8" y="278" font-size="6.4" fill="#f2f2f2" text-anchor="middle" font-weight="bold" >AP</text><path d="M1717.8 270.5 V280" stroke="#9a9a9a" stroke-width="0.8"/><text x="1696.8" y="278" font-size="6.4" fill="#f2f2f2" text-anchor="middle" font-weight="bold" >AQ</text><path d="M1759.8 270.5 V280" stroke="#9a9a9a" stroke-width="0.8"/><text x="1738.8" y="278" font-size="6.4" fill="#f2f2f2" text-anchor="middle" font-weight="bold" >AR</text><path d="M1801.8 270.5 V280" stroke="#9a9a9a" stroke-width="0.8"/><text x="1780.8" y="278" font-size="6.4" fill="#f2f2f2" text-anchor="middle" font-weight="bold" >AS</text><path d="M1843.8 270.5 V280" stroke="#9a9a9a" stroke-width="0.8"/><text x="1822.8" y="278" font-size="6.4" fill="#f2f2f2" text-anchor="middle" font-weight="bold" >AT</text><path d="M1885.8 270.5 V280" stroke="#9a9a9a" stroke-width="0.8"/><text x="1864.8" y="278" font-size="6.4" fill="#f2f2f2" text-anchor="middle" font-weight="bold" >AU</text><path d="M10.8 274.8 V277.6 H8 Z" fill="#666"/><path d="M14.6 270.5 V280" stroke="#9a9a9a" stroke-width="0.8"/></svg>
<div class="a" style="left:0;top:280px;width:14px;height:673px;background:#0a0a0a"></div>
<svg font-family="Liberation Sans" class="a" style="left:0px;top:0px" width="16" height="953" viewBox="0 0 16 953"><path d="M0 307.3 H14" stroke="#b0b0b0" stroke-width="0.7"/><text x="7" y="305.7" font-size="6.6" fill="#f2f2f2" text-anchor="middle" font-weight="bold" >1</text><path d="M0 331.3 H14" stroke="#b0b0b0" stroke-width="0.7"/><text x="7" y="329.7" font-size="6.6" fill="#f2f2f2" text-anchor="middle" font-weight="bold" >2</text><path d="M0 361.3 H14" stroke="#b0b0b0" stroke-width="0.7"/><text x="7" y="359.7" font-size="6.6" fill="#f2f2f2" text-anchor="middle" font-weight="bold" >3</text><path d="M0 371.3 H14" stroke="#b0b0b0" stroke-width="0.7"/><text x="7" y="369.7" font-size="6.6" fill="#f2f2f2" text-anchor="middle" font-weight="bold" >4</text><path d="M0 381.3 H14" stroke="#b0b0b0" stroke-width="0.7"/><text x="7" y="379.7" font-size="6.6" fill="#f2f2f2" text-anchor="middle" font-weight="bold" >5</text><path d="M0 391.3 H14" stroke="#b0b0b0" stroke-width="0.7"/><text x="7" y="389.7" font-size="6.6" fill="#f2f2f2" text-anchor="middle" font-weight="bold" >6</text><path d="M0 401.3 H14" stroke="#b0b0b0" stroke-width="0.7"/><text x="7" y="399.7" font-size="6.6" fill="#f2f2f2" text-anchor="middle" font-weight="bold" >7</text><path d="M0 411.3 H14" stroke="#b0b0b0" stroke-width="0.7"/><text x="7" y="409.7" font-size="6.6" fill="#f2f2f2" text-anchor="middle" font-weight="bold" >8</text><path d="M0 421.3 H14" stroke="#b0b0b0" stroke-width="0.7"/><text x="7" y="419.7" font-size="6.6" fill="#f2f2f2" text-anchor="middle" font-weight="bold" >9</text><path d="M0 431.3 H14" stroke="#b0b0b0" stroke-width="0.7"/><text x="7" y="429.7" font-size="6.6" fill="#f2f2f2" text-anchor="middle" font-weight="bold" >10</text><path d="M0 441.3 H14" stroke="#b0b0b0" stroke-width="0.7"/><text x="7" y="439.7" font-size="6.6" fill="#f2f2f2" text-anchor="middle" font-weight="bold" >11</text><path d="M0 451.3 H14" stroke="#b0b0b0" stroke-width="0.7"/><text x="7" y="449.7" font-size="6.6" fill="#f2f2f2" text-anchor="middle" font-weight="bold" >12</text><path d="M0 461.3 H14" stroke="#b0b0b0" stroke-width="0.7"/><text x="7" y="459.7" font-size="6.6" fill="#f2f2f2" text-anchor="middle" font-weight="bold" >13</text><path d="M0 471.3 H14" stroke="#b0b0b0" stroke-width="0.7"/><text x="7" y="469.7" font-size="6.6" fill="#f2f2f2" text-anchor="middle" font-weight="bold" >14</text><path d="M0 481.3 H14" stroke="#b0b0b0" stroke-width="0.7"/><text x="7" y="479.7" font-size="6.6" fill="#f2f2f2" text-anchor="middle" font-weight="bold" >15</text><path d="M0 491.3 H14" stroke="#b0b0b0" stroke-width="0.7"/><text x="7" y="489.7" font-size="6.6" fill="#f2f2f2" text-anchor="middle" font-weight="bold" >16</text><path d="M0 501.3 H14" stroke="#b0b0b0" stroke-width="0.7"/><text x="7" y="499.7" font-size="6.6" fill="#f2f2f2" text-anchor="middle" font-weight="bold" >17</text><path d="M0 511.3 H14" stroke="#b0b0b0" stroke-width="0.7"/><text x="7" y="509.7" font-size="6.6" fill="#f2f2f2" text-anchor="middle" font-weight="bold" >18</text><path d="M0 521.3 H14" stroke="#b0b0b0" stroke-width="0.7"/><text x="7" y="519.7" font-size="6.6" fill="#f2f2f2" text-anchor="middle" font-weight="bold" >19</text><path d="M0 531.3 H14" stroke="#b0b0b0" stroke-width="0.7"/><text x="7" y="529.7" font-size="6.6" fill="#f2f2f2" text-anchor="middle" font-weight="bold" >20</text><path d="M0 541.3 H14" stroke="#b0b0b0" stroke-width="0.7"/><text x="7" y="539.7" font-size="6.6" fill="#f2f2f2" text-anchor="middle" font-weight="bold" >21</text><path d="M0 551.3 H14" stroke="#b0b0b0" stroke-width="0.7"/><text x="7" y="549.7" font-size="6.6" fill="#f2f2f2" text-anchor="middle" font-weight="bold" >22</text><path d="M0 567.3 H14" stroke="#b0b0b0" stroke-width="0.7"/><text x="7" y="565.7" font-size="6.6" fill="#f2f2f2" text-anchor="middle" font-weight="bold" >23</text><path d="M0 577.3 H14" stroke="#b0b0b0" stroke-width="0.7"/><text x="7" y="575.7" font-size="6.6" fill="#f2f2f2" text-anchor="middle" font-weight="bold" >24</text><path d="M0 587.3 H14" stroke="#b0b0b0" stroke-width="0.7"/><text x="7" y="585.7" font-size="6.6" fill="#f2f2f2" text-anchor="middle" font-weight="bold" >25</text><path d="M0 597.3 H14" stroke="#b0b0b0" stroke-width="0.7"/><text x="7" y="595.7" font-size="6.6" fill="#f2f2f2" text-anchor="middle" font-weight="bold" >26</text><path d="M0 607.3 H14" stroke="#b0b0b0" stroke-width="0.7"/><text x="7" y="605.7" font-size="6.6" fill="#f2f2f2" text-anchor="middle" font-weight="bold" >27</text><path d="M0 617.3 H14" stroke="#b0b0b0" stroke-width="0.7"/><text x="7" y="615.7" font-size="6.6" fill="#f2f2f2" text-anchor="middle" font-weight="bold" >28</text><path d="M0 627.3 H14" stroke="#b0b0b0" stroke-width="0.7"/><text x="7" y="625.7" font-size="6.6" fill="#f2f2f2" text-anchor="middle" font-weight="bold" >29</text><path d="M0 637.3 H14" stroke="#b0b0b0" stroke-width="0.7"/><text x="7" y="635.7" font-size="6.6" fill="#f2f2f2" text-anchor="middle" font-weight="bold" >30</text><rect x="0" y="637.5" width="14" height="9.5" fill="#7a7a7a"/><rect x="13" y="637" width="1.6" height="10" fill="#1e7a46"/><path d="M0 647.3 H14" stroke="#b0b0b0" stroke-width="0.7"/><text x="7" y="645.7" font-size="6.6" fill="#f2f2f2" text-anchor="middle" font-weight="bold" >31</text><path d="M0 657.3 H14" stroke="#b0b0b0" stroke-width="0.7"/><text x="7" y="655.7" font-size="6.6" fill="#f2f2f2" text-anchor="middle" font-weight="bold" >32</text><path d="M0 667.3 H14" stroke="#b0b0b0" stroke-width="0.7"/><text x="7" y="665.7" font-size="6.6" fill="#f2f2f2" text-anchor="middle" font-weight="bold" >33</text><path d="M0 677.3 H14" stroke="#b0b0b0" stroke-width="0.7"/><text x="7" y="675.7" font-size="6.6" fill="#f2f2f2" text-anchor="middle" font-weight="bold" >34</text><path d="M0 687.3 H14" stroke="#b0b0b0" stroke-width="0.7"/><text x="7" y="685.7" font-size="6.6" fill="#f2f2f2" text-anchor="middle" font-weight="bold" >35</text><path d="M0 697.3 H14" stroke="#b0b0b0" stroke-width="0.7"/><text x="7" y="695.7" font-size="6.6" fill="#f2f2f2" text-anchor="middle" font-weight="bold" >36</text><path d="M0 707.3 H14" stroke="#b0b0b0" stroke-width="0.7"/><text x="7" y="705.7" font-size="6.6" fill="#f2f2f2" text-anchor="middle" font-weight="bold" >37</text><path d="M0 717.3 H14" stroke="#b0b0b0" stroke-width="0.7"/><text x="7" y="715.7" font-size="6.6" fill="#f2f2f2" text-anchor="middle" font-weight="bold" >38</text><path d="M0 727.3 H14" stroke="#b0b0b0" stroke-width="0.7"/><text x="7" y="725.7" font-size="6.6" fill="#f2f2f2" text-anchor="middle" font-weight="bold" >39</text><path d="M0 737.3 H14" stroke="#b0b0b0" stroke-width="0.7"/><text x="7" y="735.7" font-size="6.6" fill="#f2f2f2" text-anchor="middle" font-weight="bold" >40</text><path d="M0 747.3 H14" stroke="#b0b0b0" stroke-width="0.7"/><text x="7" y="745.7" font-size="6.6" fill="#f2f2f2" text-anchor="middle" font-weight="bold" >41</text><path d="M0 757.3 H14" stroke="#b0b0b0" stroke-width="0.7"/><text x="7" y="755.7" font-size="6.6" fill="#f2f2f2" text-anchor="middle" font-weight="bold" >42</text><path d="M0 767.3 H14" stroke="#b0b0b0" stroke-width="0.7"/><text x="7" y="765.7" font-size="6.6" fill="#f2f2f2" text-anchor="middle" font-weight="bold" >43</text><path d="M0 777.3 H14" stroke="#b0b0b0" stroke-width="0.7"/><text x="7" y="775.7" font-size="6.6" fill="#f2f2f2" text-anchor="middle" font-weight="bold" >44</text><path d="M0 787.3 H14" stroke="#b0b0b0" stroke-width="0.7"/><text x="7" y="785.7" font-size="6.6" fill="#f2f2f2" text-anchor="middle" font-weight="bold" >45</text><path d="M0 797.3 H14" stroke="#b0b0b0" stroke-width="0.7"/><text x="7" y="795.7" font-size="6.6" fill="#f2f2f2" text-anchor="middle" font-weight="bold" >46</text><path d="M0 807.3 H14" stroke="#b0b0b0" stroke-width="0.7"/><text x="7" y="805.7" font-size="6.6" fill="#f2f2f2" text-anchor="middle" font-weight="bold" >47</text><path d="M0 817.3 H14" stroke="#b0b0b0" stroke-width="0.7"/><text x="7" y="815.7" font-size="6.6" fill="#f2f2f2" text-anchor="middle" font-weight="bold" >48</text><path d="M0 827.3 H14" stroke="#b0b0b0" stroke-width="0.7"/><text x="7" y="825.7" font-size="6.6" fill="#f2f2f2" text-anchor="middle" font-weight="bold" >49</text><path d="M0 837.3 H14" stroke="#b0b0b0" stroke-width="0.7"/><text x="7" y="835.7" font-size="6.6" fill="#f2f2f2" text-anchor="middle" font-weight="bold" >50</text><path d="M0 847.3 H14" stroke="#b0b0b0" stroke-width="0.7"/><text x="7" y="845.7" font-size="6.6" fill="#f2f2f2" text-anchor="middle" font-weight="bold" >51</text><path d="M0 857.3 H14" stroke="#b0b0b0" stroke-width="0.7"/><text x="7" y="855.7" font-size="6.6" fill="#f2f2f2" text-anchor="middle" font-weight="bold" >52</text><path d="M0 867.3 H14" stroke="#b0b0b0" stroke-width="0.7"/><text x="7" y="865.7" font-size="6.6" fill="#f2f2f2" text-anchor="middle" font-weight="bold" >53</text><path d="M0 877.3 H14" stroke="#b0b0b0" stroke-width="0.7"/><text x="7" y="875.7" font-size="6.6" fill="#f2f2f2" text-anchor="middle" font-weight="bold" >54</text><path d="M0 887.3 H14" stroke="#b0b0b0" stroke-width="0.7"/><text x="7" y="885.7" font-size="6.6" fill="#f2f2f2" text-anchor="middle" font-weight="bold" >55</text><path d="M0 897.3 H14" stroke="#b0b0b0" stroke-width="0.7"/><text x="7" y="895.7" font-size="6.6" fill="#f2f2f2" text-anchor="middle" font-weight="bold" >56</text><path d="M0 907.3 H14" stroke="#b0b0b0" stroke-width="0.7"/><text x="7" y="905.7" font-size="6.6" fill="#f2f2f2" text-anchor="middle" font-weight="bold" >57</text><path d="M0 917.3 H14" stroke="#b0b0b0" stroke-width="0.7"/><text x="7" y="915.7" font-size="6.6" fill="#f2f2f2" text-anchor="middle" font-weight="bold" >58</text><path d="M0 927.3 H14" stroke="#b0b0b0" stroke-width="0.7"/><text x="7" y="925.7" font-size="6.6" fill="#f2f2f2" text-anchor="middle" font-weight="bold" >59</text><path d="M0 937.3 H14" stroke="#b0b0b0" stroke-width="0.7"/><text x="7" y="935.7" font-size="6.6" fill="#f2f2f2" text-anchor="middle" font-weight="bold" >60</text><path d="M0 947.3 H14" stroke="#b0b0b0" stroke-width="0.7"/><text x="7" y="945.7" font-size="6.6" fill="#f2f2f2" text-anchor="middle" font-weight="bold" >61</text></svg>
<div class="a" style="left:1894.5px;top:268px;width:25.5px;height:685px;background:#0a0a0a"></div>
<div class="a" style="left:1896px;top:270px;width:22px;height:686px;border-radius:10px;background:#131313"></div>
<div class="a" style="left:1902px;top:291px;width:11px;height:629px;border-radius:5.5px;background:#9e9e9e"></div>
<svg class="a" style="left:1901.5px;top:276px" width="12" height="9" viewBox="0 0 12 9"><path d="M0.5 8.5 L6 0.5 L11.5 8.5 Z" fill="#9e9e9e"/></svg>
<svg class="a" style="left:1901.5px;top:941.3px" width="12" height="9" viewBox="0 0 12 9"><path d="M0.5 0.5 L6 8.5 L11.5 0.5 Z" fill="#9e9e9e"/></svg>
<svg font-family="Liberation Sans" class="a" style="left:0px;top:0px" width="1010" height="953" viewBox="0 0 1010 953"><g fill="#9c9c9c"><rect x="338.5" y="636" width="11.1" height="4.6"/><rect x="656.7" y="637" width="10.3" height="3.6"/><rect x="445.6" y="581" width="5.2" height="60"/><rect x="512.5" y="600" width="10.5" height="48"/><rect x="473" y="643.3" width="45" height="4.7"/><path d="M452 636 L457 636 L462.5 641 L455 641 Z"/></g><g fill="none" stroke="#9c9c9c" stroke-width="5.5"><ellipse cx="431" cy="614" rx="17" ry="24.5"/><ellipse cx="497" cy="614" rx="15.5" ry="24.5"/><ellipse cx="562.5" cy="614" rx="18.5" ry="24.5"/></g><rect x="56" y="281" width="758.2" height="91.5" fill="#3c3c3c"/><rect x="58.3" y="282" width="752.5" height="87.7" fill="#0c0c0c"/><path d="M58.3 330.3 H810.8" stroke="#000" stroke-width="1"/><text x="434" y="314" font-size="23.5" fill="#fff" text-anchor="middle" font-weight="normal" textLength="360" lengthAdjust="spacingAndGlyphs">Production Monitoring Dashboard</text><text x="434" y="354" font-size="9.8" fill="#fff" text-anchor="middle" font-weight="normal" font-style="italic" textLength="52" lengthAdjust="spacingAndGlyphs">Proojet CX5</text><rect x="835" y="281" width="152" height="91.8" fill="#3c3c3c"/><rect x="838" y="282" width="145.8" height="87.7" fill="#0c0c0c"/><text x="911" y="305" font-size="6.5" fill="#fff" text-anchor="middle" font-weight="bold" textLength="48" lengthAdjust="spacing">2023-08-06</text><text x="911" y="329" font-size="6" fill="#fff" text-anchor="middle" font-weight="normal" textLength="21" lengthAdjust="spacing">Today</text><text x="911" y="355" font-size="21" fill="#fff" text-anchor="middle" font-weight="normal" textLength="24" lengthAdjust="spacingAndGlyphs">26</text><text x="911" y="369" font-size="6" fill="#fff" text-anchor="middle" font-weight="normal" textLength="18" lengthAdjust="spacing">Week</text><rect x="60" y="382.5" width="185" height="153.5" rx="6" fill="#0c0c0c" stroke="#3a3a3a" stroke-width="1"/><text x="64.7" y="394.8" font-size="8.6" fill="#f2f2f2" text-anchor="start" font-weight="normal" stroke="#f2f2f2" stroke-width="0.22" textLength="77" lengthAdjust="spacingAndGlyphs">Quality - Last Month</text><rect x="200" y="383.5" width="44.5" height="15.5" fill="#1c1c1c"/><text x="223.25" y="395.25" font-size="10.2" fill="#fff" text-anchor="middle" font-weight="bold" textLength="33" lengthAdjust="spacingAndGlyphs">2023/08</text><rect x="68.8" y="408.3" width="3.2" height="3.2" fill="#00e664"/><text x="73.3" y="411.9" font-size="5.3" fill="#f0f0f0" text-anchor="start" font-weight="bold" >% CV</text><rect x="68.8" y="418.8" width="3.2" height="3.2" fill="#ffff66"/><text x="73.3" y="422.4" font-size="5.3" fill="#f0f0f0" text-anchor="start" font-weight="bold" >% I CJ</text><rect x="68.8" y="429.1" width="3.2" height="3.2" fill="#ffb000"/><text x="73.3" y="432.7" font-size="5.3" fill="#f0f0f0" text-anchor="start" font-weight="bold" >% I CO</text><rect x="68.8" y="439.6" width="3.2" height="3.2" fill="#ff3300"/><text x="73.3" y="443.2" font-size="5.3" fill="#f0f0f0" text-anchor="start" font-weight="bold" >% CR</text><text x="88.3" y="467.7" font-size="4.8" fill="#f0f0f0" text-anchor="middle" font-weight="normal" >Lot</text><rect x="66.7" y="473.8" width="45.3" height="15.899999999999977" fill="#202020"/><text x="89.14999999999999" y="486.15" font-size="10.3" fill="#fff" text-anchor="middle" font-weight="bold" textLength="25.5" lengthAdjust="spacingAndGlyphs">10000</text><text x="88" y="503.7" font-size="4.8" fill="#f0f0f0" text-anchor="middle" font-weight="normal" >Red cards</text><rect x="66.7" y="512" width="45.3" height="15.5" fill="#4a1010"/><text x="89.14999999999999" y="524.15" font-size="10.3" fill="#ff3310" text-anchor="middle" font-weight="bold" textLength="15.5" lengthAdjust="spacingAndGlyphs">100</text><circle cx="177" cy="456" r="52.7" fill="none" stroke="#00e664" stroke-width="6.6"/><rect x="173.8" y="399.5" width="3" height="7.8" fill="#0e0e0e"/><rect x="174" y="396.7" width="2.6" height="8" rx="1" fill="#ff2a10"/><text x="174.4" y="401.7" font-size="5" fill="#fff" text-anchor="middle" font-weight="bold" textLength="14.5" lengthAdjust="spacingAndGlyphs">0,0%</text><text x="178" y="463.8" font-size="17.5" fill="#fff" text-anchor="middle" font-weight="normal" textLength="52" lengthAdjust="spacingAndGlyphs">99,0%</text><rect x="259" y="382.5" width="185" height="153.5" rx="6" fill="#0c0c0c" stroke="#3a3a3a" stroke-width="1"/><text x="266.3" y="394.8" font-size="8.6" fill="#f2f2f2" text-anchor="start" font-weight="normal" stroke="#f2f2f2" stroke-width="0.22" textLength="66" lengthAdjust="spacingAndGlyphs">Quality - Last Run</text><rect x="400" y="383.5" width="43.5" height="15.5" fill="#1c1c1c"/><text x="422.75" y="395.25" font-size="10.2" fill="#fff" text-anchor="middle" font-weight="bold" textLength="25.5" lengthAdjust="spacingAndGlyphs">1-Aug</text><rect x="267.8" y="408.3" width="3.2" height="3.2" fill="#00e664"/><text x="272.3" y="411.9" font-size="5.3" fill="#f0f0f0" text-anchor="start" font-weight="bold" >% CV</text><rect x="267.8" y="418.8" width="3.2" height="3.2" fill="#ffff66"/><text x="272.3" y="422.4" font-size="5.3" fill="#f0f0f0" text-anchor="start" font-weight="bold" >% I CJ</text><rect x="267.8" y="429.1" width="3.2" height="3.2" fill="#ffb000"/><text x="272.3" y="432.7" font-size="5.3" fill="#f0f0f0" text-anchor="start" font-weight="bold" >% I CO</text><rect x="267.8" y="439.8" width="3.2" height="3.2" fill="#ff3300"/><text x="272.3" y="443.4" font-size="5.3" fill="#f0f0f0" text-anchor="start" font-weight="bold" >% CR</text><text x="291" y="462.7" font-size="4.8" fill="#f0f0f0" text-anchor="middle" font-weight="normal" >Lot</text><rect x="268" y="473.8" width="46" height="14.899999999999977" fill="#202020"/><text x="290.8" y="485.65" font-size="10.3" fill="#fff" text-anchor="middle" font-weight="bold" textLength="25.5" lengthAdjust="spacingAndGlyphs">10000</text><text x="290.5" y="500.7" font-size="4.8" fill="#f0f0f0" text-anchor="middle" font-weight="normal" >Red cards</text><rect x="268" y="512" width="46" height="15.5" fill="#4a1010"/><text x="290.8" y="524.15" font-size="10.3" fill="#ff3310" text-anchor="middle" font-weight="bold" textLength="15.5" lengthAdjust="spacingAndGlyphs">100</text><circle cx="376" cy="456" r="52.7" fill="none" stroke="#00e664" stroke-width="6.6"/><rect x="372.8" y="399.5" width="3" height="7.8" fill="#0e0e0e"/><rect x="373" y="396.7" width="2.6" height="8" rx="1" fill="#ff2a10"/><text x="373.4" y="401.7" font-size="5" fill="#fff" text-anchor="middle" font-weight="bold" textLength="14.5" lengthAdjust="spacingAndGlyphs">0,0%</text><text x="377.5" y="463.8" font-size="17.5" fill="#fff" text-anchor="middle" font-weight="normal" textLength="52" lengthAdjust="spacingAndGlyphs">99,0%</text><rect x="451.5" y="382.5" width="187.0" height="153.79999999999995" rx="6" fill="#0c0c0c" stroke="#3a3a3a" stroke-width="1"/><text x="457" y="394.8" font-size="8.6" fill="#f2f2f2" text-anchor="start" font-weight="normal" stroke="#f2f2f2" stroke-width="0.22" textLength="54" lengthAdjust="spacingAndGlyphs">OEE - Last Run</text><rect x="592" y="385" width="45" height="16.5" fill="#1c1c1c"/><text x="615.5" y="397.25" font-size="10.2" fill="#fff" text-anchor="middle" font-weight="bold" textLength="25.5" lengthAdjust="spacingAndGlyphs">1-Aug</text><rect x="462.5" y="410.1" width="3.2" height="3.2" fill="#ff3300"/><text x="467.0" y="413.7" font-size="5.3" fill="#f0f0f0" text-anchor="start" font-weight="bold" >% NON-</text><text x="467.0" y="420.9" font-size="5.3" fill="#f0f0f0" text-anchor="start" font-weight="bold" textLength="33" lengthAdjust="spacingAndGlyphs">AVAILABILITY</text><rect x="462.5" y="431.3" width="3.2" height="3.2" fill="#00e664"/><text x="467.0" y="434.9" font-size="5.3" fill="#f0f0f0" text-anchor="start" font-weight="bold" >OEE</text><text x="480.7" y="463.0" font-size="4.8" fill="#f0f0f0" text-anchor="middle" font-weight="normal" >Target</text><rect x="458" y="473" width="46" height="15.199999999999989" fill="#202020"/><text x="480.8" y="485.0" font-size="10.3" fill="#fff" text-anchor="middle" font-weight="bold" textLength="25.5" lengthAdjust="spacingAndGlyphs">10000</text><text x="480" y="499.7" font-size="4.8" fill="#f0f0f0" text-anchor="middle" font-weight="normal" >Loss</text><rect x="458" y="510.2" width="46" height="15.800000000000011" fill="#4a1010"/><text x="480.8" y="522.5" font-size="10.3" fill="#ff3310" text-anchor="middle" font-weight="bold" textLength="21" lengthAdjust="spacingAndGlyphs">5000</text><path d="M568.6 400.0 A54.5 54.5 0 0 0 568.6 509.0" fill="none" stroke="#00e664" stroke-width="5.6"/><path d="M570.1999999999999 400.0 A54.5 54.5 0 0 1 570.1999999999999 509.0" fill="none" stroke="#ff3300" stroke-width="5.6"/><text x="619.4" y="456.8" font-size="4.6" fill="#fff" text-anchor="middle" font-weight="normal" >50,0%</text><text x="570" y="459.8" font-size="17.5" fill="#fff" text-anchor="middle" font-weight="normal" textLength="52" lengthAdjust="spacingAndGlyphs">50,0%</text><rect x="643.4" y="383.7" width="185.0" height="153.3" rx="6" fill="#0c0c0c" stroke="#3a3a3a" stroke-width="1"/><text x="649" y="395.8" font-size="8.6" fill="#f2f2f2" text-anchor="start" font-weight="normal" stroke="#f2f2f2" stroke-width="0.22" textLength="65" lengthAdjust="spacingAndGlyphs">OEE - Last Month</text><rect x="783" y="385" width="44.5" height="16" fill="#1c1c1c"/><text x="806.25" y="397.0" font-size="10.2" fill="#fff" text-anchor="middle" font-weight="bold" textLength="33" lengthAdjust="spacingAndGlyphs">2023/08</text><rect x="654" y="411.2" width="3.2" height="3.2" fill="#ff3300"/><text x="658.5" y="414.79999999999995" font-size="5.3" fill="#f0f0f0" text-anchor="start" font-weight="bold" >% NON-</text><text x="658.5" y="421.99999999999994" font-size="5.3" fill="#f0f0f0" text-anchor="start" font-weight="bold" textLength="33" lengthAdjust="spacingAndGlyphs">AVAILABILITY</text><rect x="654" y="432.3" width="3.2" height="3.2" fill="#00e664"/><text x="658.5" y="435.9" font-size="5.3" fill="#f0f0f0" text-anchor="start" font-weight="bold" >OEE</text><text x="672.5" y="467.9" font-size="4.8" fill="#f0f0f0" text-anchor="middle" font-weight="normal" >Target</text><rect x="651" y="473" width="45" height="15" fill="#202020"/><text x="673.3" y="484.9" font-size="10.3" fill="#fff" text-anchor="middle" font-weight="bold" textLength="25.5" lengthAdjust="spacingAndGlyphs">10000</text><text x="671" y="502.7" font-size="4.8" fill="#f0f0f0" text-anchor="middle" font-weight="normal" >Loss</text><rect x="651" y="511" width="45" height="16" fill="#4a1010"/><text x="673.3" y="523.4" font-size="10.3" fill="#ff3310" text-anchor="middle" font-weight="bold" textLength="21" lengthAdjust="spacingAndGlyphs">5000</text><path d="M759.4000000000001 401.0 A54.2 54.2 0 0 0 759.4000000000001 509.4" fill="none" stroke="#00e664" stroke-width="5.6"/><path d="M761.0 401.0 A54.2 54.2 0 0 1 761.0 509.4" fill="none" stroke="#ff3300" stroke-width="5.6"/><text x="810.2" y="457.5" font-size="4.6" fill="#fff" text-anchor="middle" font-weight="normal" >50,0%</text><text x="758" y="457.8" font-size="17.5" fill="#fff" text-anchor="middle" font-weight="normal" textLength="52" lengthAdjust="spacingAndGlyphs">50,0%</text><rect x="57" y="539.7" width="188.3" height="95.89999999999998" rx="6" fill="#0c0c0c" stroke="#3a3a3a" stroke-width="1"/><text x="150" y="550.7" font-size="5.8" fill="#f0f0f0" text-anchor="middle" font-weight="bold" textLength="82.5" lengthAdjust="spacingAndGlyphs">% OK Parts - Last 10 Months</text><path d="M64 561 H217.3" stroke="#565656" stroke-width="0.7"/><path d="M64 572.6 H217.3" stroke="#565656" stroke-width="0.7"/><path d="M64 584.4 H217.3" stroke="#565656" stroke-width="0.7"/><path d="M64 596.2 H217.3" stroke="#565656" stroke-width="0.7"/><path d="M64 607.8 H217.3" stroke="#565656" stroke-width="0.7"/><path d="M64 619.6 H217.3" stroke="#565656" stroke-width="0.7"/><text x="222.8" y="563.4" font-size="5.3" fill="#f0f0f0" text-anchor="start" font-weight="bold" >100,0%</text><text x="222.8" y="575.0" font-size="5.3" fill="#f0f0f0" text-anchor="start" font-weight="bold" >80,0%</text><text x="222.8" y="586.8" font-size="5.3" fill="#f0f0f0" text-anchor="start" font-weight="bold" >60,0%</text><text x="222.8" y="598.6" font-size="5.3" fill="#f0f0f0" text-anchor="start" font-weight="bold" >40,0%</text><text x="222.8" y="610.1999999999999" font-size="5.3" fill="#f0f0f0" text-anchor="start" font-weight="bold" >20,0%</text><text x="222.8" y="622.0" font-size="5.3" fill="#f0f0f0" text-anchor="start" font-weight="bold" >0,0%</text><text x="70.8" y="628.8" font-size="4.9" fill="#f0f0f0" text-anchor="middle" font-weight="bold" >11</text><text x="86.2" y="628.8" font-size="4.9" fill="#f0f0f0" text-anchor="middle" font-weight="bold" >12</text><text x="101.6" y="628.8" font-size="4.9" fill="#f0f0f0" text-anchor="middle" font-weight="bold" >13</text><text x="117.0" y="628.8" font-size="4.9" fill="#f0f0f0" text-anchor="middle" font-weight="bold" >14</text><text x="132.4" y="628.8" font-size="4.9" fill="#f0f0f0" text-anchor="middle" font-weight="bold" >15</text><text x="147.8" y="628.8" font-size="4.9" fill="#f0f0f0" text-anchor="middle" font-weight="bold" >16</text><text x="163.2" y="628.8" font-size="4.9" fill="#f0f0f0" text-anchor="middle" font-weight="bold" >17</text><text x="178.6" y="628.8" font-size="4.9" fill="#f0f0f0" text-anchor="middle" font-weight="bold" >18</text><text x="194.0" y="628.8" font-size="4.9" fill="#f0f0f0" text-anchor="middle" font-weight="bold" >19</text><text x="209.39999999999998" y="628.8" font-size="4.9" fill="#f0f0f0" text-anchor="middle" font-weight="bold" >20</text><path d="M70.8 619.6 L163.2 619.6 L178.6 561.0 L209.4 561.0" fill="none" stroke="#00ee55" stroke-width="1.1" stroke-linejoin="round"/><rect x="258" y="539.7" width="188" height="95.89999999999998" rx="6" fill="#0c0c0c" stroke="#3a3a3a" stroke-width="1"/><text x="351.4" y="550.7" font-size="5.8" fill="#f0f0f0" text-anchor="middle" font-weight="bold" textLength="73.4" lengthAdjust="spacingAndGlyphs">% OK Parts  - Last 10 Run</text><path d="M264.8 561 H418.5" stroke="#565656" stroke-width="0.7"/><path d="M264.8 572.6 H418.5" stroke="#565656" stroke-width="0.7"/><path d="M264.8 584.4 H418.5" stroke="#565656" stroke-width="0.7"/><path d="M264.8 596.2 H418.5" stroke="#565656" stroke-width="0.7"/><path d="M264.8 607.8 H418.5" stroke="#565656" stroke-width="0.7"/><path d="M264.8 619.6 H418.5" stroke="#565656" stroke-width="0.7"/><text x="424" y="563.4" font-size="5.3" fill="#f0f0f0" text-anchor="start" font-weight="bold" >100,0%</text><text x="424" y="575.0" font-size="5.3" fill="#f0f0f0" text-anchor="start" font-weight="bold" >80,0%</text><text x="424" y="586.8" font-size="5.3" fill="#f0f0f0" text-anchor="start" font-weight="bold" >60,0%</text><text x="424" y="598.6" font-size="5.3" fill="#f0f0f0" text-anchor="start" font-weight="bold" >40,0%</text><text x="424" y="610.1999999999999" font-size="5.3" fill="#f0f0f0" text-anchor="start" font-weight="bold" >20,0%</text><text x="424" y="622.0" font-size="5.3" fill="#f0f0f0" text-anchor="start" font-weight="bold" >0,0%</text><text x="272.3" y="628.8" font-size="4.9" fill="#f0f0f0" text-anchor="middle" font-weight="bold" >2</text><text x="287.7" y="628.8" font-size="4.9" fill="#f0f0f0" text-anchor="middle" font-weight="bold" >3</text><text x="303.1" y="628.8" font-size="4.9" fill="#f0f0f0" text-anchor="middle" font-weight="bold" >4</text><text x="318.5" y="628.8" font-size="4.9" fill="#f0f0f0" text-anchor="middle" font-weight="bold" >5</text><text x="333.90000000000003" y="628.8" font-size="4.9" fill="#f0f0f0" text-anchor="middle" font-weight="bold" >6</text><text x="349.3" y="628.8" font-size="4.9" fill="#f0f0f0" text-anchor="middle" font-weight="bold" >7</text><text x="364.70000000000005" y="628.8" font-size="4.9" fill="#f0f0f0" text-anchor="middle" font-weight="bold" >8</text><text x="380.1" y="628.8" font-size="4.9" fill="#f0f0f0" text-anchor="middle" font-weight="bold" >9</text><text x="395.5" y="628.8" font-size="4.9" fill="#f0f0f0" text-anchor="middle" font-weight="bold" >10</text><text x="410.9" y="628.8" font-size="4.9" fill="#f0f0f0" text-anchor="middle" font-weight="bold" >11</text><path d="M272.3 561.6 L410.9 561.6" fill="none" stroke="#00b050" stroke-width="1.1" stroke-linejoin="round"/><rect x="451" y="539.7" width="188.79999999999995" height="95.89999999999998" rx="6" fill="#0c0c0c" stroke="#3a3a3a" stroke-width="1"/><text x="544.5" y="550.7" font-size="5.8" fill="#f0f0f0" text-anchor="middle" font-weight="bold" textLength="69" lengthAdjust="spacingAndGlyphs">OEE Chart - Last 10 Run</text><path d="M457 561 H611.8" stroke="#565656" stroke-width="0.7"/><path d="M457 572.6 H611.8" stroke="#565656" stroke-width="0.7"/><path d="M457 584.4 H611.8" stroke="#565656" stroke-width="0.7"/><path d="M457 596.2 H611.8" stroke="#565656" stroke-width="0.7"/><path d="M457 607.8 H611.8" stroke="#565656" stroke-width="0.7"/><path d="M457 619.6 H611.8" stroke="#565656" stroke-width="0.7"/><text x="617.3" y="563.4" font-size="5.3" fill="#f0f0f0" text-anchor="start" font-weight="bold" >100,0%</text><text x="617.3" y="575.0" font-size="5.3" fill="#f0f0f0" text-anchor="start" font-weight="bold" >80,0%</text><text x="617.3" y="586.8" font-size="5.3" fill="#f0f0f0" text-anchor="start" font-weight="bold" >60,0%</text><text x="617.3" y="598.6" font-size="5.3" fill="#f0f0f0" text-anchor="start" font-weight="bold" >40,0%</text><text x="617.3" y="610.1999999999999" font-size="5.3" fill="#f0f0f0" text-anchor="start" font-weight="bold" >20,0%</text><text x="617.3" y="622.0" font-size="5.3" fill="#f0f0f0" text-anchor="start" font-weight="bold" >0,0%</text><text x="464.7" y="628.8" font-size="4.9" fill="#f0f0f0" text-anchor="middle" font-weight="bold" >2</text><text x="480.09999999999997" y="628.8" font-size="4.9" fill="#f0f0f0" text-anchor="middle" font-weight="bold" >3</text><text x="495.5" y="628.8" font-size="4.9" fill="#f0f0f0" text-anchor="middle" font-weight="bold" >4</text><text x="510.9" y="628.8" font-size="4.9" fill="#f0f0f0" text-anchor="middle" font-weight="bold" >5</text><text x="526.3" y="628.8" font-size="4.9" fill="#f0f0f0" text-anchor="middle" font-weight="bold" >6</text><text x="541.7" y="628.8" font-size="4.9" fill="#f0f0f0" text-anchor="middle" font-weight="bold" >7</text><text x="557.1" y="628.8" font-size="4.9" fill="#f0f0f0" text-anchor="middle" font-weight="bold" >8</text><text x="572.5" y="628.8" font-size="4.9" fill="#f0f0f0" text-anchor="middle" font-weight="bold" >9</text><text x="587.9" y="628.8" font-size="4.9" fill="#f0f0f0" text-anchor="middle" font-weight="bold" >10</text><text x="603.3" y="628.8" font-size="4.9" fill="#f0f0f0" text-anchor="middle" font-weight="bold" >11</text><path d="M464.7 566.9 L526.3 566.9 L541.7 572.7 L557.1 572.7 L572.5 566.9 L587.9 575.6 L603.3 590.3" fill="none" stroke="#00b050" stroke-width="1.1" stroke-linejoin="round"/><rect x="641.2" y="542.3" width="187.19999999999993" height="93.70000000000005" rx="6" fill="#0c0c0c" stroke="#3a3a3a" stroke-width="1"/><text x="733.6" y="552.6" font-size="5.8" fill="#f0f0f0" text-anchor="middle" font-weight="bold" textLength="80.3" lengthAdjust="spacingAndGlyphs">OEE Chart - Last 10 Months</text><path d="M646.7 563.2 H800.6" stroke="#565656" stroke-width="0.7"/><path d="M646.7 574.8 H800.6" stroke="#565656" stroke-width="0.7"/><path d="M646.7 586.3 H800.6" stroke="#565656" stroke-width="0.7"/><path d="M646.7 597.9 H800.6" stroke="#565656" stroke-width="0.7"/><path d="M646.7 609.4 H800.6" stroke="#565656" stroke-width="0.7"/><path d="M646.7 621 H800.6" stroke="#565656" stroke-width="0.7"/><text x="806" y="565.6" font-size="5.3" fill="#f0f0f0" text-anchor="start" font-weight="bold" >100,0%</text><text x="806" y="577.1999999999999" font-size="5.3" fill="#f0f0f0" text-anchor="start" font-weight="bold" >80,0%</text><text x="806" y="588.6999999999999" font-size="5.3" fill="#f0f0f0" text-anchor="start" font-weight="bold" >60,0%</text><text x="806" y="600.3" font-size="5.3" fill="#f0f0f0" text-anchor="start" font-weight="bold" >40,0%</text><text x="806" y="611.8" font-size="5.3" fill="#f0f0f0" text-anchor="start" font-weight="bold" >20,0%</text><text x="806" y="623.4" font-size="5.3" fill="#f0f0f0" text-anchor="start" font-weight="bold" >0,0%</text><text x="654.4" y="630.8" font-size="4.9" fill="#f0f0f0" text-anchor="middle" font-weight="bold" >11</text><text x="669.8" y="630.8" font-size="4.9" fill="#f0f0f0" text-anchor="middle" font-weight="bold" >12</text><text x="685.1999999999999" y="630.8" font-size="4.9" fill="#f0f0f0" text-anchor="middle" font-weight="bold" >13</text><text x="700.6" y="630.8" font-size="4.9" fill="#f0f0f0" text-anchor="middle" font-weight="bold" >14</text><text x="716.0" y="630.8" font-size="4.9" fill="#f0f0f0" text-anchor="middle" font-weight="bold" >15</text><text x="731.4" y="630.8" font-size="4.9" fill="#f0f0f0" text-anchor="middle" font-weight="bold" >16</text><text x="746.8" y="630.8" font-size="4.9" fill="#f0f0f0" text-anchor="middle" font-weight="bold" >17</text><text x="762.1999999999999" y="630.8" font-size="4.9" fill="#f0f0f0" text-anchor="middle" font-weight="bold" >18</text><text x="777.6" y="630.8" font-size="4.9" fill="#f0f0f0" text-anchor="middle" font-weight="bold" >19</text><text x="793.0" y="630.8" font-size="4.9" fill="#f0f0f0" text-anchor="middle" font-weight="bold" >20</text><path d="M762.2 570.7 L777.6 574.8 L793.0 592.1" fill="none" stroke="#00ee55" stroke-width="1.1" stroke-linejoin="round"/><rect x="51.5" y="641.5" width="378.0" height="253.79999999999995" rx="7" fill="#0c0c0c" stroke="#3a3a3a" stroke-width="1"/><text x="239.3" y="655.2" font-size="7.9" fill="#f2f2f2" text-anchor="middle" font-weight="bold" textLength="186" lengthAdjust="spacingAndGlyphs">PARETO OF STOP CAUSES FOR THE PAST 4 WEEKS</text><path d="M66.1 665 V859 H397.3" fill="none" stroke="#bdbdbd" stroke-width="0.8"/><text x="61.5" y="667.0" font-size="4.8" fill="#f0f0f0" text-anchor="end" font-weight="bold" >30</text><text x="61.5" y="699.3" font-size="4.8" fill="#f0f0f0" text-anchor="end" font-weight="bold" >25</text><text x="61.5" y="731.6" font-size="4.8" fill="#f0f0f0" text-anchor="end" font-weight="bold" >20</text><text x="61.5" y="763.9" font-size="4.8" fill="#f0f0f0" text-anchor="end" font-weight="bold" >15</text><text x="61.5" y="828.5" font-size="4.8" fill="#f0f0f0" text-anchor="end" font-weight="bold" >5</text><text x="61.5" y="860.8" font-size="4.8" fill="#f0f0f0" text-anchor="end" font-weight="bold" >0</text><path d="M64.6 859.0 H66.1" stroke="#bdbdbd" stroke-width="0.7"/><path d="M64.6 826.7 H66.1" stroke="#bdbdbd" stroke-width="0.7"/><path d="M64.6 794.4 H66.1" stroke="#bdbdbd" stroke-width="0.7"/><path d="M64.6 762.1 H66.1" stroke="#bdbdbd" stroke-width="0.7"/><path d="M64.6 729.8000000000001 H66.1" stroke="#bdbdbd" stroke-width="0.7"/><path d="M64.6 697.5 H66.1" stroke="#bdbdbd" stroke-width="0.7"/><path d="M64.6 665.2 H66.1" stroke="#bdbdbd" stroke-width="0.7"/><rect x="76.6" y="729.8" width="13.4" height="129.2" fill="#ff3300"/><rect x="110" y="729.8" width="13.0" height="129.2" fill="#ff7f60"/><rect x="143.9" y="729.8" width="12.1" height="129.2" fill="#ff7f60"/><rect x="176.6" y="788.6" width="12.7" height="70.4" fill="#0000ff"/><rect x="209.9" y="762.7" width="12.1" height="96.3" fill="#ff7f60"/><rect x="209.9" y="697.8" width="12.1" height="64.9" fill="#ff3300"/><rect x="242.9" y="773.7" width="12.3" height="85.3" fill="#7030a0"/><rect x="275.8" y="776.0" width="13.5" height="83.0" fill="#ff3300"/><rect x="309.9" y="786.6" width="12.1" height="72.4" fill="#ffff00"/><rect x="342.9" y="799.6" width="12.1" height="59.4" fill="#ff7f60"/><path d="M66.1 859 V860.8" stroke="#bdbdbd" stroke-width="0.7"/><path d="M99.2 859 V860.8" stroke="#bdbdbd" stroke-width="0.7"/><path d="M132.3 859 V860.8" stroke="#bdbdbd" stroke-width="0.7"/><path d="M165.5 859 V860.8" stroke="#bdbdbd" stroke-width="0.7"/><path d="M198.6 859 V860.8" stroke="#bdbdbd" stroke-width="0.7"/><path d="M231.7 859 V860.8" stroke="#bdbdbd" stroke-width="0.7"/><path d="M264.8 859 V860.8" stroke="#bdbdbd" stroke-width="0.7"/><path d="M297.9 859 V860.8" stroke="#bdbdbd" stroke-width="0.7"/><path d="M331.1 859 V860.8" stroke="#bdbdbd" stroke-width="0.7"/><path d="M364.2 859 V860.8" stroke="#bdbdbd" stroke-width="0.7"/><path d="M397.3 859 V860.8" stroke="#bdbdbd" stroke-width="0.7"/><rect x="53.7" y="791.3" width="60.5" height="8.5" fill="#fff" stroke="#555" stroke-width="0.5"/><text x="83.95" y="797.3499999999999" font-size="4.9" fill="#222" text-anchor="middle" font-weight="normal" textLength="55.5" lengthAdjust="spacingAndGlyphs">Cause16 Machine 5; 20</text><rect x="87.5" y="726.2" width="33.0" height="8.4" fill="#fff" stroke="#555" stroke-width="0.5"/><text x="89.7" y="732.2" font-size="4.9" fill="#222" text-anchor="start" font-weight="normal" textLength="30.0" lengthAdjust="spacingAndGlyphs">Cause16 Ma</text><rect x="120.5" y="726.2" width="57.8" height="8.4" fill="#fff" stroke="#555" stroke-width="0.5"/><text x="149.4" y="732.2" font-size="4.9" fill="#222" text-anchor="middle" font-weight="normal" textLength="52.8" lengthAdjust="spacingAndGlyphs">Cause16 Machine 6; 0</text><rect x="183.5" y="726.2" width="64.5" height="8.4" fill="#fff" stroke="#555" stroke-width="0.5"/><text x="215.75" y="732.2" font-size="4.9" fill="#222" text-anchor="middle" font-weight="normal" textLength="59.5" lengthAdjust="spacingAndGlyphs">Cause20 Machine 11; 10</text><rect x="218.7" y="765.2" width="60.4" height="8.4" fill="#fff" stroke="#555" stroke-width="0.5"/><text x="248.9" y="771.2" font-size="4.9" fill="#222" text-anchor="middle" font-weight="normal" textLength="55.4" lengthAdjust="spacingAndGlyphs">Cause19 Machine 10; 0</text><rect x="286.5" y="778" width="57.8" height="8.6" fill="#fff" stroke="#555" stroke-width="0.5"/><text x="315.4" y="784.0999999999999" font-size="4.9" fill="#222" text-anchor="middle" font-weight="normal" textLength="52.8" lengthAdjust="spacingAndGlyphs">Cause17 Machine 8; 0</text><rect x="319.5" y="791.3" width="58.0" height="8.5" fill="#fff" stroke="#555" stroke-width="0.5"/><text x="348.5" y="797.3499999999999" font-size="4.9" fill="#222" text-anchor="middle" font-weight="normal" textLength="53.0" lengthAdjust="spacingAndGlyphs">Cause15 Machine 6; 0</text><rect x="251.6" y="813.6" width="61.4" height="8.6" fill="#fff" stroke="#555" stroke-width="0.5"/><text x="282.3" y="819.7" font-size="4.9" fill="#222" text-anchor="middle" font-weight="normal" textLength="56.4" lengthAdjust="spacingAndGlyphs">Cause18 Machine 9; 13</text><rect x="153.5" y="856" width="58.3" height="8.3" fill="#fff" stroke="#555" stroke-width="0.5"/><text x="182.65" y="861.9499999999999" font-size="4.9" fill="#222" text-anchor="middle" font-weight="normal" textLength="53.3" lengthAdjust="spacingAndGlyphs">Cause16 Machine 7; 0</text><rect x="362.4" y="856" width="39.1" height="8.3" fill="#fff" stroke="#555" stroke-width="0.5"/><text x="381.95" y="861.9499999999999" font-size="4.9" fill="#222" text-anchor="middle" font-weight="normal" textLength="34.1" lengthAdjust="spacingAndGlyphs">(vide) (vide); 0</text><text x="82.7" y="868.8" font-size="5" fill="#f0f0f0" text-anchor="middle" font-weight="bold" >Machine 5</text><text x="82.7" y="876.6" font-size="5" fill="#f0f0f0" text-anchor="middle" font-weight="bold" >Cause16</text><text x="115.82" y="868.8" font-size="5" fill="#f0f0f0" text-anchor="middle" font-weight="bold" >Machine 4</text><text x="115.82" y="876.6" font-size="5" fill="#f0f0f0" text-anchor="middle" font-weight="bold" >Cause16</text><text x="148.94" y="868.8" font-size="5" fill="#f0f0f0" text-anchor="middle" font-weight="bold" >Machine 6</text><text x="148.94" y="876.6" font-size="5" fill="#f0f0f0" text-anchor="middle" font-weight="bold" >Cause16</text><text x="182.06" y="868.8" font-size="5" fill="#f0f0f0" text-anchor="middle" font-weight="bold" >Machine 7</text><text x="182.06" y="876.6" font-size="5" fill="#f0f0f0" text-anchor="middle" font-weight="bold" >Cause16</text><text x="215.18" y="868.8" font-size="5" fill="#f0f0f0" text-anchor="middle" font-weight="bold" >Machine 11</text><text x="215.18" y="876.6" font-size="5" fill="#f0f0f0" text-anchor="middle" font-weight="bold" >Cause20</text><text x="248.3" y="868.8" font-size="5" fill="#f0f0f0" text-anchor="middle" font-weight="bold" >Machine 10</text><text x="248.3" y="876.6" font-size="5" fill="#f0f0f0" text-anchor="middle" font-weight="bold" >Cause19</text><text x="281.41999999999996" y="868.8" font-size="5" fill="#f0f0f0" text-anchor="middle" font-weight="bold" >Machine 9</text><text x="281.41999999999996" y="876.6" font-size="5" fill="#f0f0f0" text-anchor="middle" font-weight="bold" >Cause18</text><text x="314.53999999999996" y="868.8" font-size="5" fill="#f0f0f0" text-anchor="middle" font-weight="bold" >Machine 8</text><text x="314.53999999999996" y="876.6" font-size="5" fill="#f0f0f0" text-anchor="middle" font-weight="bold" >Cause17</text><text x="347.65999999999997" y="868.8" font-size="5" fill="#f0f0f0" text-anchor="middle" font-weight="bold" >Machine 6</text><text x="347.65999999999997" y="876.6" font-size="5" fill="#f0f0f0" text-anchor="middle" font-weight="bold" >Cause15</text><text x="380.78" y="868.8" font-size="5" fill="#f0f0f0" text-anchor="middle" font-weight="bold" >(vide)</text><text x="380.78" y="876.6" font-size="5" fill="#f0f0f0" text-anchor="middle" font-weight="bold" >(vide)</text><rect x="409.7" y="752.8" width="2.4" height="2.4" fill="#0000ff"/><text x="414" y="755.8" font-size="4.9" fill="#f0f0f0" text-anchor="start" font-weight="bold" >CS</text><rect x="409.7" y="763.8" width="2.4" height="2.4" fill="#ff3300"/><text x="414" y="766.8" font-size="4.9" fill="#f0f0f0" text-anchor="start" font-weight="bold" >NQ</text><rect x="409.7" y="775.8" width="2.4" height="2.4" fill="#ffff00"/><text x="414" y="778.8" font-size="4.9" fill="#f0f0f0" text-anchor="start" font-weight="bold" >DO</text><rect x="409.7" y="786.8" width="2.4" height="2.4" fill="#ff7f60"/><text x="414" y="789.8" font-size="4.9" fill="#f0f0f0" text-anchor="start" font-weight="bold" >PA</text><rect x="409.7" y="797.8" width="2.4" height="2.4" fill="#7030a0"/><text x="414" y="800.8" font-size="4.9" fill="#f0f0f0" text-anchor="start" font-weight="bold" >AP</text><rect x="441.5" y="647.9" width="371.9" height="242.39999999999998" rx="7" fill="#0c0c0c" stroke="#3a3a3a" stroke-width="1"/><text x="627.4" y="661.2" font-size="7.9" fill="#f2f2f2" text-anchor="middle" font-weight="bold" textLength="212" lengthAdjust="spacingAndGlyphs">PARETO OF MAIN CARD CAUSES FOR THE PAST 4 WEEKS</text><path d="M458.3 854.8 H784.6" stroke="#bdbdbd" stroke-width="0.8"/><path d="M458.3 854.8 V856.5999999999999" stroke="#bdbdbd" stroke-width="0.7"/><path d="M490.9 854.8 V856.5999999999999" stroke="#bdbdbd" stroke-width="0.7"/><path d="M523.6 854.8 V856.5999999999999" stroke="#bdbdbd" stroke-width="0.7"/><path d="M556.2 854.8 V856.5999999999999" stroke="#bdbdbd" stroke-width="0.7"/><path d="M588.8 854.8 V856.5999999999999" stroke="#bdbdbd" stroke-width="0.7"/><path d="M621.5 854.8 V856.5999999999999" stroke="#bdbdbd" stroke-width="0.7"/><path d="M654.1 854.8 V856.5999999999999" stroke="#bdbdbd" stroke-width="0.7"/><path d="M686.7 854.8 V856.5999999999999" stroke="#bdbdbd" stroke-width="0.7"/><path d="M719.3 854.8 V856.5999999999999" stroke="#bdbdbd" stroke-width="0.7"/><path d="M752.0 854.8 V856.5999999999999" stroke="#bdbdbd" stroke-width="0.7"/><path d="M784.6 854.8 V856.5999999999999" stroke="#bdbdbd" stroke-width="0.7"/><rect x="467.9" y="697.9" width="13.5" height="156.9" fill="#ff3300"/><rect x="469.15" y="771.7" width="11" height="8" fill="#7a7a7a" fill-opacity="0.55"/><text x="474.65" y="777.5" font-size="4.8" fill="#fff" text-anchor="middle" font-weight="bold" >300</text><text x="474.65" y="699.9" font-size="4.8" fill="#fff" text-anchor="middle" font-weight="bold" >0</text><text x="474.65" y="856.0" font-size="4.8" fill="#fff" text-anchor="middle" font-weight="bold" >0</text><rect x="500.1" y="694.6" width="14.0" height="160.2" fill="#ff3300"/><rect x="501.6" y="770.7" width="11" height="8" fill="#7a7a7a" fill-opacity="0.55"/><text x="507.1" y="776.5" font-size="4.8" fill="#fff" text-anchor="middle" font-weight="bold" >305</text><text x="507.1" y="696.6" font-size="4.8" fill="#fff" text-anchor="middle" font-weight="bold" >0</text><text x="507.1" y="856.0" font-size="4.8" fill="#fff" text-anchor="middle" font-weight="bold" >0</text><rect x="533.1" y="799.9" width="12.9" height="54.9" fill="#ffff00"/><text x="539.55" y="829.0999999999999" font-size="4.8" fill="#fff" text-anchor="middle" font-weight="bold" >103</text><rect x="536.25" y="795.4" width="6.6" height="8.5" fill="#7a7a7a" fill-opacity="0.6"/><text x="539.55" y="801.9" font-size="4.8" fill="#fff" text-anchor="middle" font-weight="bold" >0</text><text x="539.55" y="856.0" font-size="4.8" fill="#fff" text-anchor="middle" font-weight="bold" >0</text><rect x="565.8" y="799.9" width="13.5" height="54.9" fill="#ffc000"/><text x="572.55" y="829.8" font-size="4.8" fill="#fff" text-anchor="middle" font-weight="bold" >103</text><rect x="569.25" y="795.4" width="6.6" height="8.5" fill="#7a7a7a" fill-opacity="0.6"/><text x="572.55" y="801.9" font-size="4.8" fill="#fff" text-anchor="middle" font-weight="bold" >0</text><text x="572.55" y="856.0" font-size="4.8" fill="#fff" text-anchor="middle" font-weight="bold" >0</text><rect x="598" y="801" width="13.1" height="53.8" fill="#ff3300"/><rect x="599.05" y="824" width="11" height="8" fill="#7a7a7a" fill-opacity="0.55"/><text x="604.55" y="829.8" font-size="4.8" fill="#fff" text-anchor="middle" font-weight="bold" >102</text><text x="604.55" y="803" font-size="4.8" fill="#fff" text-anchor="middle" font-weight="bold" >0</text><text x="604.55" y="856.0" font-size="4.8" fill="#fff" text-anchor="middle" font-weight="bold" >0</text><rect x="630.9" y="801" width="13.2" height="53.8" fill="#ff3300"/><rect x="632.0" y="824" width="11" height="8" fill="#7a7a7a" fill-opacity="0.55"/><text x="637.5" y="829.8" font-size="4.8" fill="#fff" text-anchor="middle" font-weight="bold" >101</text><text x="637.5" y="803" font-size="4.8" fill="#fff" text-anchor="middle" font-weight="bold" >0</text><text x="637.5" y="856.0" font-size="4.8" fill="#fff" text-anchor="middle" font-weight="bold" >0</text><rect x="663.9" y="802" width="13.2" height="52.8" fill="#ff3300"/><rect x="665.0" y="824" width="11" height="8" fill="#7a7a7a" fill-opacity="0.55"/><text x="670.5" y="829.8" font-size="4.8" fill="#fff" text-anchor="middle" font-weight="bold" >100</text><text x="670.5" y="804" font-size="4.8" fill="#fff" text-anchor="middle" font-weight="bold" >0</text><text x="670.5" y="856.0" font-size="4.8" fill="#fff" text-anchor="middle" font-weight="bold" >0</text><rect x="699.76" y="849.8" width="6.6" height="9" fill="#4a4a4a"/><text x="703.06" y="856.1999999999999" font-size="4.8" fill="#fff" text-anchor="middle" font-weight="bold" >0</text><rect x="732.3900000000001" y="849.8" width="6.6" height="9" fill="#4a4a4a"/><text x="735.69" y="856.1999999999999" font-size="4.8" fill="#fff" text-anchor="middle" font-weight="bold" >0</text><rect x="765.02" y="849.8" width="6.6" height="9" fill="#4a4a4a"/><text x="768.3199999999999" y="856.1999999999999" font-size="4.8" fill="#fff" text-anchor="middle" font-weight="bold" >0</text><text x="474.65" y="864.1" font-size="5" fill="#f0f0f0" text-anchor="middle" font-weight="bold" >Machine 7</text><text x="474.65" y="871" font-size="5" fill="#f0f0f0" text-anchor="middle" font-weight="bold" >Cause19</text><text x="507.28" y="864.1" font-size="5" fill="#f0f0f0" text-anchor="middle" font-weight="bold" >Machine 11</text><text x="507.28" y="871" font-size="5" fill="#f0f0f0" text-anchor="middle" font-weight="bold" >Cause19</text><text x="539.91" y="864.1" font-size="5" fill="#f0f0f0" text-anchor="middle" font-weight="bold" >Machine 10</text><text x="539.91" y="871" font-size="5" fill="#f0f0f0" text-anchor="middle" font-weight="bold" >Cause18</text><text x="572.54" y="864.1" font-size="5" fill="#f0f0f0" text-anchor="middle" font-weight="bold" >Machine 9</text><text x="572.54" y="871" font-size="5" fill="#f0f0f0" text-anchor="middle" font-weight="bold" >Cause17</text><text x="605.17" y="864.1" font-size="5" fill="#f0f0f0" text-anchor="middle" font-weight="bold" >Machine 8</text><text x="605.17" y="871" font-size="5" fill="#f0f0f0" text-anchor="middle" font-weight="bold" >Cause16</text><text x="637.8" y="864.1" font-size="5" fill="#f0f0f0" text-anchor="middle" font-weight="bold" >Machine 7</text><text x="637.8" y="871" font-size="5" fill="#f0f0f0" text-anchor="middle" font-weight="bold" >Cause15</text><text x="670.4300000000001" y="864.1" font-size="5" fill="#f0f0f0" text-anchor="middle" font-weight="bold" >Machine 6</text><text x="670.4300000000001" y="871" font-size="5" fill="#f0f0f0" text-anchor="middle" font-weight="bold" >Cause14</text><text x="703.06" y="864.1" font-size="5" fill="#f0f0f0" text-anchor="middle" font-weight="bold" >(vide)</text><text x="703.06" y="871" font-size="5" fill="#f0f0f0" text-anchor="middle" font-weight="bold" >(vide)</text><text x="735.69" y="864.1" font-size="5" fill="#f0f0f0" text-anchor="middle" font-weight="bold" >0</text><text x="735.69" y="871" font-size="5" fill="#f0f0f0" text-anchor="middle" font-weight="bold" >0</text><text x="768.3199999999999" y="864.1" font-size="5" fill="#f0f0f0" text-anchor="middle" font-weight="bold" >0</text><text x="768.3199999999999" y="871" font-size="5" fill="#f0f0f0" text-anchor="middle" font-weight="bold" >0</text><rect x="794.8" y="764.3" width="3" height="3" fill="#ff3300"/><text x="799" y="767.5999999999999" font-size="4.9" fill="#f0f0f0" text-anchor="start" font-weight="bold" >CR</text><rect x="794.8" y="775.5" width="3" height="3" fill="#ffc000"/><text x="799" y="778.8" font-size="4.9" fill="#f0f0f0" text-anchor="start" font-weight="bold" >CO</text><rect x="794.8" y="786.5" width="3" height="3" fill="#ffff00"/><text x="799" y="789.8" font-size="4.9" fill="#f0f0f0" text-anchor="start" font-weight="bold" >CJ</text><rect x="832.7" y="383.6" width="151.69999999999993" height="57.0" rx="7" fill="#0c0c0c" stroke="#3a3a3a" stroke-width="1"/><rect x="849.7" y="391" width="2.2" height="2.2" fill="#e05a5a"/><text x="853.3000000000001" y="393.9" font-size="5.0" fill="#f0f0f0" text-anchor="start" font-weight="bold" >Cause19</text><path d="M863.5 401.4 V416.7 H965.5" fill="none" stroke="#bdbdbd" stroke-width="0.8"/><text x="858.5" y="403.2" font-size="4.8" fill="#f0f0f0" text-anchor="end" font-weight="bold" >500</text><path d="M862.0 401.4 H863.5" stroke="#bdbdbd" stroke-width="0.7"/><text x="858.5" y="418.5" font-size="4.8" fill="#f0f0f0" text-anchor="end" font-weight="bold" >0</text><path d="M862.0 416.7 H863.5" stroke="#bdbdbd" stroke-width="0.7"/><path d="M863.5 415.2 V418.2" stroke="#bdbdbd" stroke-width="0.7"/><path d="M873.7 415.2 V418.2" stroke="#bdbdbd" stroke-width="0.7"/><path d="M883.9 415.2 V418.2" stroke="#bdbdbd" stroke-width="0.7"/><path d="M894.1 415.2 V418.2" stroke="#bdbdbd" stroke-width="0.7"/><path d="M904.3 415.2 V418.2" stroke="#bdbdbd" stroke-width="0.7"/><path d="M914.5 415.2 V418.2" stroke="#bdbdbd" stroke-width="0.7"/><path d="M924.7 415.2 V418.2" stroke="#bdbdbd" stroke-width="0.7"/><path d="M934.9 415.2 V418.2" stroke="#bdbdbd" stroke-width="0.7"/><path d="M945.1 415.2 V418.2" stroke="#bdbdbd" stroke-width="0.7"/><path d="M955.3 415.2 V418.2" stroke="#bdbdbd" stroke-width="0.7"/><path d="M965.5 415.2 V418.2" stroke="#bdbdbd" stroke-width="0.7"/><text x="868.6" y="426.7" font-size="4.8" fill="#f0f0f0" text-anchor="middle" font-weight="bold" >0</text><text x="878.8000000000001" y="426.7" font-size="4.8" fill="#f0f0f0" text-anchor="middle" font-weight="bold" >0</text><text x="889.0" y="426.7" font-size="4.8" fill="#f0f0f0" text-anchor="middle" font-weight="bold" >0</text><text x="899.2" y="426.7" font-size="4.8" fill="#f0f0f0" text-anchor="middle" font-weight="bold" >0</text><text x="909.4" y="426.7" font-size="4.8" fill="#f0f0f0" text-anchor="middle" font-weight="bold" >0</text><text x="919.6" y="426.7" font-size="4.8" fill="#f0f0f0" text-anchor="middle" font-weight="bold" >0</text><text x="929.8000000000001" y="426.7" font-size="4.8" fill="#f0f0f0" text-anchor="middle" font-weight="bold" >S25</text><text x="940.0" y="426.7" font-size="4.8" fill="#f0f0f0" text-anchor="middle" font-weight="bold" >S26</text><text x="950.2" y="426.7" font-size="4.8" fill="#f0f0f0" text-anchor="middle" font-weight="bold" >S27</text><text x="960.4" y="426.7" font-size="4.8" fill="#f0f0f0" text-anchor="middle" font-weight="bold" >S31</text><rect x="938.5" y="405.2" width="3" height="11.5" fill="#e05a5a"/><rect x="948.7" y="414.7" width="3" height="2" fill="#e05a5a"/><rect x="958.9" y="414.7" width="3" height="2" fill="#e05a5a"/><rect x="832.7" y="446.8" width="151.69999999999993" height="56.599999999999966" rx="7" fill="#0c0c0c" stroke="#3a3a3a" stroke-width="1"/><rect x="849.7" y="454" width="2.2" height="2.2" fill="#f4a460"/><text x="853.3000000000001" y="456.9" font-size="5.0" fill="#f0f0f0" text-anchor="start" font-weight="bold" >Cause16</text><path d="M863.5 464 V479.8 H965.5" fill="none" stroke="#bdbdbd" stroke-width="0.8"/><text x="858.5" y="465.8" font-size="4.8" fill="#f0f0f0" text-anchor="end" font-weight="bold" >200</text><path d="M862.0 464.0 H863.5" stroke="#bdbdbd" stroke-width="0.7"/><text x="858.5" y="473.7" font-size="4.8" fill="#f0f0f0" text-anchor="end" font-weight="bold" >100</text><path d="M862.0 471.9 H863.5" stroke="#bdbdbd" stroke-width="0.7"/><text x="858.5" y="481.6" font-size="4.8" fill="#f0f0f0" text-anchor="end" font-weight="bold" >0</text><path d="M862.0 479.8 H863.5" stroke="#bdbdbd" stroke-width="0.7"/><path d="M863.5 478.3 V481.3" stroke="#bdbdbd" stroke-width="0.7"/><path d="M873.7 478.3 V481.3" stroke="#bdbdbd" stroke-width="0.7"/><path d="M883.9 478.3 V481.3" stroke="#bdbdbd" stroke-width="0.7"/><path d="M894.1 478.3 V481.3" stroke="#bdbdbd" stroke-width="0.7"/><path d="M904.3 478.3 V481.3" stroke="#bdbdbd" stroke-width="0.7"/><path d="M914.5 478.3 V481.3" stroke="#bdbdbd" stroke-width="0.7"/><path d="M924.7 478.3 V481.3" stroke="#bdbdbd" stroke-width="0.7"/><path d="M934.9 478.3 V481.3" stroke="#bdbdbd" stroke-width="0.7"/><path d="M945.1 478.3 V481.3" stroke="#bdbdbd" stroke-width="0.7"/><path d="M955.3 478.3 V481.3" stroke="#bdbdbd" stroke-width="0.7"/><path d="M965.5 478.3 V481.3" stroke="#bdbdbd" stroke-width="0.7"/><text x="868.6" y="489.8" font-size="4.8" fill="#f0f0f0" text-anchor="middle" font-weight="bold" >0</text><text x="878.8000000000001" y="489.8" font-size="4.8" fill="#f0f0f0" text-anchor="middle" font-weight="bold" >0</text><text x="889.0" y="489.8" font-size="4.8" fill="#f0f0f0" text-anchor="middle" font-weight="bold" >0</text><text x="899.2" y="489.8" font-size="4.8" fill="#f0f0f0" text-anchor="middle" font-weight="bold" >0</text><text x="909.4" y="489.8" font-size="4.8" fill="#f0f0f0" text-anchor="middle" font-weight="bold" >0</text><text x="919.6" y="489.8" font-size="4.8" fill="#f0f0f0" text-anchor="middle" font-weight="bold" >0</text><text x="929.8000000000001" y="489.8" font-size="4.8" fill="#f0f0f0" text-anchor="middle" font-weight="bold" >S25</text><text x="940.0" y="489.8" font-size="4.8" fill="#f0f0f0" text-anchor="middle" font-weight="bold" >S26</text><text x="950.2" y="489.8" font-size="4.8" fill="#f0f0f0" text-anchor="middle" font-weight="bold" >S27</text><text x="960.4" y="489.8" font-size="4.8" fill="#f0f0f0" text-anchor="middle" font-weight="bold" >S31</text><rect x="928.3000000000001" y="472.8" width="3" height="7" fill="#f4a460"/><rect x="832.7" y="508.9" width="151.69999999999993" height="57.0" rx="7" fill="#0c0c0c" stroke="#3a3a3a" stroke-width="1"/><rect x="849.7" y="516" width="2.2" height="2.2" fill="#fff2b0"/><text x="853.3000000000001" y="518.9" font-size="5.0" fill="#f0f0f0" text-anchor="start" font-weight="bold" >Cause15</text><path d="M863.5 526.5 V542 H965.5" fill="none" stroke="#bdbdbd" stroke-width="0.8"/><text x="858.5" y="528.3" font-size="4.8" fill="#f0f0f0" text-anchor="end" font-weight="bold" >200</text><path d="M862.0 526.5 H863.5" stroke="#bdbdbd" stroke-width="0.7"/><text x="858.5" y="536.05" font-size="4.8" fill="#f0f0f0" text-anchor="end" font-weight="bold" >100</text><path d="M862.0 534.25 H863.5" stroke="#bdbdbd" stroke-width="0.7"/><text x="858.5" y="543.8" font-size="4.8" fill="#f0f0f0" text-anchor="end" font-weight="bold" >0</text><path d="M862.0 542.0 H863.5" stroke="#bdbdbd" stroke-width="0.7"/><path d="M863.5 540.5 V543.5" stroke="#bdbdbd" stroke-width="0.7"/><path d="M873.7 540.5 V543.5" stroke="#bdbdbd" stroke-width="0.7"/><path d="M883.9 540.5 V543.5" stroke="#bdbdbd" stroke-width="0.7"/><path d="M894.1 540.5 V543.5" stroke="#bdbdbd" stroke-width="0.7"/><path d="M904.3 540.5 V543.5" stroke="#bdbdbd" stroke-width="0.7"/><path d="M914.5 540.5 V543.5" stroke="#bdbdbd" stroke-width="0.7"/><path d="M924.7 540.5 V543.5" stroke="#bdbdbd" stroke-width="0.7"/><path d="M934.9 540.5 V543.5" stroke="#bdbdbd" stroke-width="0.7"/><path d="M945.1 540.5 V543.5" stroke="#bdbdbd" stroke-width="0.7"/><path d="M955.3 540.5 V543.5" stroke="#bdbdbd" stroke-width="0.7"/><path d="M965.5 540.5 V543.5" stroke="#bdbdbd" stroke-width="0.7"/><text x="868.6" y="552" font-size="4.8" fill="#f0f0f0" text-anchor="middle" font-weight="bold" >0</text><text x="878.8000000000001" y="552" font-size="4.8" fill="#f0f0f0" text-anchor="middle" font-weight="bold" >0</text><text x="889.0" y="552" font-size="4.8" fill="#f0f0f0" text-anchor="middle" font-weight="bold" >0</text><text x="899.2" y="552" font-size="4.8" fill="#f0f0f0" text-anchor="middle" font-weight="bold" >0</text><text x="909.4" y="552" font-size="4.8" fill="#f0f0f0" text-anchor="middle" font-weight="bold" >0</text><text x="919.6" y="552" font-size="4.8" fill="#f0f0f0" text-anchor="middle" font-weight="bold" >0</text><text x="929.8000000000001" y="552" font-size="4.8" fill="#f0f0f0" text-anchor="middle" font-weight="bold" >S25</text><text x="940.0" y="552" font-size="4.8" fill="#f0f0f0" text-anchor="middle" font-weight="bold" >S26</text><text x="950.2" y="552" font-size="4.8" fill="#f0f0f0" text-anchor="middle" font-weight="bold" >S27</text><text x="960.4" y="552" font-size="4.8" fill="#f0f0f0" text-anchor="middle" font-weight="bold" >S31</text><rect x="928.3000000000001" y="535" width="3" height="7" fill="#fff2b0"/><rect x="832.7" y="570.6" width="151.69999999999993" height="58.10000000000002" rx="7" fill="#0c0c0c" stroke="#3a3a3a" stroke-width="1"/><rect x="849.7" y="578" width="2.2" height="2.2" fill="#fff2b0"/><text x="853.3000000000001" y="580.9" font-size="5.0" fill="#f0f0f0" text-anchor="start" font-weight="bold" >Cause14</text><path d="M863.5 588.5 V604 H965.5" fill="none" stroke="#bdbdbd" stroke-width="0.8"/><text x="858.5" y="590.3" font-size="4.8" fill="#f0f0f0" text-anchor="end" font-weight="bold" >200</text><path d="M862.0 588.5 H863.5" stroke="#bdbdbd" stroke-width="0.7"/><text x="858.5" y="598.05" font-size="4.8" fill="#f0f0f0" text-anchor="end" font-weight="bold" >100</text><path d="M862.0 596.25 H863.5" stroke="#bdbdbd" stroke-width="0.7"/><text x="858.5" y="605.8" font-size="4.8" fill="#f0f0f0" text-anchor="end" font-weight="bold" >0</text><path d="M862.0 604.0 H863.5" stroke="#bdbdbd" stroke-width="0.7"/><path d="M863.5 602.5 V605.5" stroke="#bdbdbd" stroke-width="0.7"/><path d="M873.7 602.5 V605.5" stroke="#bdbdbd" stroke-width="0.7"/><path d="M883.9 602.5 V605.5" stroke="#bdbdbd" stroke-width="0.7"/><path d="M894.1 602.5 V605.5" stroke="#bdbdbd" stroke-width="0.7"/><path d="M904.3 602.5 V605.5" stroke="#bdbdbd" stroke-width="0.7"/><path d="M914.5 602.5 V605.5" stroke="#bdbdbd" stroke-width="0.7"/><path d="M924.7 602.5 V605.5" stroke="#bdbdbd" stroke-width="0.7"/><path d="M934.9 602.5 V605.5" stroke="#bdbdbd" stroke-width="0.7"/><path d="M945.1 602.5 V605.5" stroke="#bdbdbd" stroke-width="0.7"/><path d="M955.3 602.5 V605.5" stroke="#bdbdbd" stroke-width="0.7"/><path d="M965.5 602.5 V605.5" stroke="#bdbdbd" stroke-width="0.7"/><text x="868.6" y="614" font-size="4.8" fill="#f0f0f0" text-anchor="middle" font-weight="bold" >0</text><text x="878.8000000000001" y="614" font-size="4.8" fill="#f0f0f0" text-anchor="middle" font-weight="bold" >0</text><text x="889.0" y="614" font-size="4.8" fill="#f0f0f0" text-anchor="middle" font-weight="bold" >0</text><text x="899.2" y="614" font-size="4.8" fill="#f0f0f0" text-anchor="middle" font-weight="bold" >0</text><text x="909.4" y="614" font-size="4.8" fill="#f0f0f0" text-anchor="middle" font-weight="bold" >0</text><text x="919.6" y="614" font-size="4.8" fill="#f0f0f0" text-anchor="middle" font-weight="bold" >0</text><text x="929.8000000000001" y="614" font-size="4.8" fill="#f0f0f0" text-anchor="middle" font-weight="bold" >S25</text><text x="940.0" y="614" font-size="4.8" fill="#f0f0f0" text-anchor="middle" font-weight="bold" >S26</text><text x="950.2" y="614" font-size="4.8" fill="#f0f0f0" text-anchor="middle" font-weight="bold" >S27</text><text x="960.4" y="614" font-size="4.8" fill="#f0f0f0" text-anchor="middle" font-weight="bold" >S31</text><rect x="928.3000000000001" y="597" width="3" height="7" fill="#fff2b0"/><rect x="833" y="651.4" width="154" height="61.0" rx="7" fill="#0c0c0c" stroke="#3a3a3a" stroke-width="1"/><rect x="849" y="660" width="2.2" height="2.2" fill="#e05a5a"/><text x="852.6" y="662.9" font-size="5.0" fill="#f0f0f0" text-anchor="start" font-weight="bold" >Cause16</text><path d="M861 670 V686.5 H967.6" fill="none" stroke="#bdbdbd" stroke-width="0.8"/><text x="856" y="671.8" font-size="4.8" fill="#f0f0f0" text-anchor="end" font-weight="bold" >40</text><path d="M859.5 670.0 H861" stroke="#bdbdbd" stroke-width="0.7"/><text x="856" y="680.05" font-size="4.8" fill="#f0f0f0" text-anchor="end" font-weight="bold" >20</text><path d="M859.5 678.25 H861" stroke="#bdbdbd" stroke-width="0.7"/><text x="856" y="688.3" font-size="4.8" fill="#f0f0f0" text-anchor="end" font-weight="bold" >0</text><path d="M859.5 686.5 H861" stroke="#bdbdbd" stroke-width="0.7"/><path d="M861.0 685.0 V688.0" stroke="#bdbdbd" stroke-width="0.7"/><path d="M871.66 685.0 V688.0" stroke="#bdbdbd" stroke-width="0.7"/><path d="M882.32 685.0 V688.0" stroke="#bdbdbd" stroke-width="0.7"/><path d="M892.98 685.0 V688.0" stroke="#bdbdbd" stroke-width="0.7"/><path d="M903.64 685.0 V688.0" stroke="#bdbdbd" stroke-width="0.7"/><path d="M914.3 685.0 V688.0" stroke="#bdbdbd" stroke-width="0.7"/><path d="M924.96 685.0 V688.0" stroke="#bdbdbd" stroke-width="0.7"/><path d="M935.62 685.0 V688.0" stroke="#bdbdbd" stroke-width="0.7"/><path d="M946.28 685.0 V688.0" stroke="#bdbdbd" stroke-width="0.7"/><path d="M956.94 685.0 V688.0" stroke="#bdbdbd" stroke-width="0.7"/><path d="M967.6 685.0 V688.0" stroke="#bdbdbd" stroke-width="0.7"/><text x="866.33" y="696.5" font-size="4.8" fill="#f0f0f0" text-anchor="middle" font-weight="bold" >0</text><text x="876.99" y="696.5" font-size="4.8" fill="#f0f0f0" text-anchor="middle" font-weight="bold" >0</text><text x="887.6500000000001" y="696.5" font-size="4.8" fill="#f0f0f0" text-anchor="middle" font-weight="bold" >0</text><text x="898.3100000000001" y="696.5" font-size="4.8" fill="#f0f0f0" text-anchor="middle" font-weight="bold" >0</text><text x="908.97" y="696.5" font-size="4.8" fill="#f0f0f0" text-anchor="middle" font-weight="bold" >0</text><text x="919.63" y="696.5" font-size="4.8" fill="#f0f0f0" text-anchor="middle" font-weight="bold" >0</text><text x="930.2900000000001" y="696.5" font-size="4.8" fill="#f0f0f0" text-anchor="middle" font-weight="bold" >S25</text><text x="940.95" y="696.5" font-size="4.8" fill="#f0f0f0" text-anchor="middle" font-weight="bold" >S26</text><text x="951.61" y="696.5" font-size="4.8" fill="#f0f0f0" text-anchor="middle" font-weight="bold" >S27</text><text x="962.27" y="696.5" font-size="4.8" fill="#f0f0f0" text-anchor="middle" font-weight="bold" >S31</text><rect x="928.7900000000001" y="683.5" width="3" height="3" fill="#e05a5a"/><rect x="939.45" y="679.5" width="3" height="7" fill="#e05a5a"/><rect x="950.11" y="679.5" width="3" height="7" fill="#e05a5a"/><rect x="960.77" y="679.5" width="3" height="7" fill="#e05a5a"/><rect x="833" y="715.6" width="154" height="59.299999999999955" rx="7" fill="#0c0c0c" stroke="#3a3a3a" stroke-width="1"/><rect x="849" y="723" width="2.2" height="2.2" fill="#f4a460"/><text x="852.6" y="725.9" font-size="5.7" fill="#f0f0f0" text-anchor="start" font-weight="bold" >Cause20</text><path d="M861.5 734 V749 H968.1" fill="none" stroke="#bdbdbd" stroke-width="0.8"/><text x="856.5" y="735.8" font-size="5.5" fill="#f0f0f0" text-anchor="end" font-weight="bold" >50</text><path d="M860.0 734.0 H861.5" stroke="#bdbdbd" stroke-width="0.7"/><text x="856.5" y="750.8" font-size="5.5" fill="#f0f0f0" text-anchor="end" font-weight="bold" >0</text><path d="M860.0 749.0 H861.5" stroke="#bdbdbd" stroke-width="0.7"/><path d="M861.5 747.5 V750.5" stroke="#bdbdbd" stroke-width="0.7"/><path d="M872.16 747.5 V750.5" stroke="#bdbdbd" stroke-width="0.7"/><path d="M882.82 747.5 V750.5" stroke="#bdbdbd" stroke-width="0.7"/><path d="M893.48 747.5 V750.5" stroke="#bdbdbd" stroke-width="0.7"/><path d="M904.14 747.5 V750.5" stroke="#bdbdbd" stroke-width="0.7"/><path d="M914.8 747.5 V750.5" stroke="#bdbdbd" stroke-width="0.7"/><path d="M925.46 747.5 V750.5" stroke="#bdbdbd" stroke-width="0.7"/><path d="M936.12 747.5 V750.5" stroke="#bdbdbd" stroke-width="0.7"/><path d="M946.78 747.5 V750.5" stroke="#bdbdbd" stroke-width="0.7"/><path d="M957.44 747.5 V750.5" stroke="#bdbdbd" stroke-width="0.7"/><path d="M968.1 747.5 V750.5" stroke="#bdbdbd" stroke-width="0.7"/><text x="866.83" y="759" font-size="5.5" fill="#f0f0f0" text-anchor="middle" font-weight="bold" >0</text><text x="877.49" y="759" font-size="5.5" fill="#f0f0f0" text-anchor="middle" font-weight="bold" >0</text><text x="888.1500000000001" y="759" font-size="5.5" fill="#f0f0f0" text-anchor="middle" font-weight="bold" >0</text><text x="898.8100000000001" y="759" font-size="5.5" fill="#f0f0f0" text-anchor="middle" font-weight="bold" >0</text><text x="909.47" y="759" font-size="5.5" fill="#f0f0f0" text-anchor="middle" font-weight="bold" >0</text><text x="920.13" y="759" font-size="5.5" fill="#f0f0f0" text-anchor="middle" font-weight="bold" >0</text><text x="930.7900000000001" y="759" font-size="5.5" fill="#f0f0f0" text-anchor="middle" font-weight="bold" >S25</text><text x="941.45" y="759" font-size="5.5" fill="#f0f0f0" text-anchor="middle" font-weight="bold" >S26</text><text x="952.11" y="759" font-size="5.5" fill="#f0f0f0" text-anchor="middle" font-weight="bold" >S27</text><text x="962.77" y="759" font-size="5.5" fill="#f0f0f0" text-anchor="middle" font-weight="bold" >S31</text><rect x="939.95" y="742.5" width="3" height="6.5" fill="#f4a460"/><rect x="833" y="780.4" width="154" height="59.89999999999998" rx="7" fill="#0c0c0c" stroke="#3a3a3a" stroke-width="1"/><rect x="849" y="788" width="2.2" height="2.2" fill="#fff2b0"/><text x="852.6" y="790.9" font-size="5.7" fill="#f0f0f0" text-anchor="start" font-weight="bold" >Cause19</text><path d="M861.5 798 V813 H968.1" fill="none" stroke="#bdbdbd" stroke-width="0.8"/><text x="856.5" y="799.8" font-size="5.5" fill="#f0f0f0" text-anchor="end" font-weight="bold" >20</text><path d="M860.0 798.0 H861.5" stroke="#bdbdbd" stroke-width="0.7"/><text x="856.5" y="814.8" font-size="5.5" fill="#f0f0f0" text-anchor="end" font-weight="bold" >0</text><path d="M860.0 813.0 H861.5" stroke="#bdbdbd" stroke-width="0.7"/><path d="M861.5 811.5 V814.5" stroke="#bdbdbd" stroke-width="0.7"/><path d="M872.16 811.5 V814.5" stroke="#bdbdbd" stroke-width="0.7"/><path d="M882.82 811.5 V814.5" stroke="#bdbdbd" stroke-width="0.7"/><path d="M893.48 811.5 V814.5" stroke="#bdbdbd" stroke-width="0.7"/><path d="M904.14 811.5 V814.5" stroke="#bdbdbd" stroke-width="0.7"/><path d="M914.8 811.5 V814.5" stroke="#bdbdbd" stroke-width="0.7"/><path d="M925.46 811.5 V814.5" stroke="#bdbdbd" stroke-width="0.7"/><path d="M936.12 811.5 V814.5" stroke="#bdbdbd" stroke-width="0.7"/><path d="M946.78 811.5 V814.5" stroke="#bdbdbd" stroke-width="0.7"/><path d="M957.44 811.5 V814.5" stroke="#bdbdbd" stroke-width="0.7"/><path d="M968.1 811.5 V814.5" stroke="#bdbdbd" stroke-width="0.7"/><text x="866.83" y="823" font-size="5.5" fill="#f0f0f0" text-anchor="middle" font-weight="bold" >0</text><text x="877.49" y="823" font-size="5.5" fill="#f0f0f0" text-anchor="middle" font-weight="bold" >0</text><text x="888.1500000000001" y="823" font-size="5.5" fill="#f0f0f0" text-anchor="middle" font-weight="bold" >0</text><text x="898.8100000000001" y="823" font-size="5.5" fill="#f0f0f0" text-anchor="middle" font-weight="bold" >0</text><text x="909.47" y="823" font-size="5.5" fill="#f0f0f0" text-anchor="middle" font-weight="bold" >0</text><text x="920.13" y="823" font-size="5.5" fill="#f0f0f0" text-anchor="middle" font-weight="bold" >0</text><text x="930.7900000000001" y="823" font-size="5.5" fill="#f0f0f0" text-anchor="middle" font-weight="bold" >S25</text><text x="941.45" y="823" font-size="5.5" fill="#f0f0f0" text-anchor="middle" font-weight="bold" >S26</text><text x="952.11" y="823" font-size="5.5" fill="#f0f0f0" text-anchor="middle" font-weight="bold" >S27</text><text x="962.77" y="823" font-size="5.5" fill="#f0f0f0" text-anchor="middle" font-weight="bold" >S31</text><rect x="929.2900000000001" y="804.5" width="3" height="8.5" fill="#fff2b0"/><rect x="833" y="847.8" width="154" height="59.60000000000002" rx="7" fill="#0c0c0c" stroke="#3a3a3a" stroke-width="1"/><rect x="849" y="855" width="2.2" height="2.2" fill="#fff2b0"/><text x="852.6" y="857.9" font-size="5.0" fill="#f0f0f0" text-anchor="start" font-weight="bold" >Cause18</text><path d="M861 866 V882 H967.6" fill="none" stroke="#bdbdbd" stroke-width="0.8"/><text x="856" y="867.8" font-size="4.8" fill="#f0f0f0" text-anchor="end" font-weight="bold" >20</text><path d="M859.5 866.0 H861" stroke="#bdbdbd" stroke-width="0.7"/><text x="856" y="875.8" font-size="4.8" fill="#f0f0f0" text-anchor="end" font-weight="bold" >10</text><path d="M859.5 874.0 H861" stroke="#bdbdbd" stroke-width="0.7"/><text x="856" y="883.8" font-size="4.8" fill="#f0f0f0" text-anchor="end" font-weight="bold" >0</text><path d="M859.5 882.0 H861" stroke="#bdbdbd" stroke-width="0.7"/><path d="M861.0 880.5 V883.5" stroke="#bdbdbd" stroke-width="0.7"/><path d="M871.66 880.5 V883.5" stroke="#bdbdbd" stroke-width="0.7"/><path d="M882.32 880.5 V883.5" stroke="#bdbdbd" stroke-width="0.7"/><path d="M892.98 880.5 V883.5" stroke="#bdbdbd" stroke-width="0.7"/><path d="M903.64 880.5 V883.5" stroke="#bdbdbd" stroke-width="0.7"/><path d="M914.3 880.5 V883.5" stroke="#bdbdbd" stroke-width="0.7"/><path d="M924.96 880.5 V883.5" stroke="#bdbdbd" stroke-width="0.7"/><path d="M935.62 880.5 V883.5" stroke="#bdbdbd" stroke-width="0.7"/><path d="M946.28 880.5 V883.5" stroke="#bdbdbd" stroke-width="0.7"/><path d="M956.94 880.5 V883.5" stroke="#bdbdbd" stroke-width="0.7"/><path d="M967.6 880.5 V883.5" stroke="#bdbdbd" stroke-width="0.7"/><text x="866.33" y="892" font-size="4.8" fill="#f0f0f0" text-anchor="middle" font-weight="bold" >0</text><text x="876.99" y="892" font-size="4.8" fill="#f0f0f0" text-anchor="middle" font-weight="bold" >0</text><text x="887.6500000000001" y="892" font-size="4.8" fill="#f0f0f0" text-anchor="middle" font-weight="bold" >0</text><text x="898.3100000000001" y="892" font-size="4.8" fill="#f0f0f0" text-anchor="middle" font-weight="bold" >0</text><text x="908.97" y="892" font-size="4.8" fill="#f0f0f0" text-anchor="middle" font-weight="bold" >0</text><text x="919.63" y="892" font-size="4.8" fill="#f0f0f0" text-anchor="middle" font-weight="bold" >0</text><text x="930.2900000000001" y="892" font-size="4.8" fill="#f0f0f0" text-anchor="middle" font-weight="bold" >S25</text><text x="940.95" y="892" font-size="4.8" fill="#f0f0f0" text-anchor="middle" font-weight="bold" >S26</text><text x="951.61" y="892" font-size="4.8" fill="#f0f0f0" text-anchor="middle" font-weight="bold" >S27</text><text x="962.27" y="892" font-size="4.8" fill="#f0f0f0" text-anchor="middle" font-weight="bold" >S31</text><rect x="928.7900000000001" y="872.5" width="3" height="9.5" fill="#fff2b0"/><rect x="836" y="636.5" width="43" height="11" fill="none" stroke="#1e7a46" stroke-width="1.2"/><rect x="837.6" y="638" width="40" height="8" fill="none" stroke="#fff" stroke-width="1.4"/><rect x="876.5" y="645" width="4" height="4" fill="#1e7a46" stroke="#fff" stroke-width="0.6"/></svg>
<div class="a" style="left:14px;top:280px;width:991px;height:2px;background:#5a5ad8"></div>
<div class="a" style="left:14px;top:281px;width:1.3px;height:657px;background:#5050d0"></div>
<div class="a" style="left:1002.5px;top:281px;width:2.8px;height:657px;background:#1414f0"></div>
<div class="a" style="left:14px;top:935.5px;width:991px;height:3px;background:#0c0ce8"></div>
<div class="a" style="left:0;top:953px;width:1920px;height:40px;background:#0a0a0a"></div>
<svg class="a" style="left:30px;top:965px" width="12" height="14" viewBox="0 0 12 14"><path d="M8.5 1.5 L2.5 7 L8.5 12.5" fill="none" stroke="#9a9a9a" stroke-width="1.4"/></svg>
<svg class="a" style="left:70px;top:965px" width="12" height="14" viewBox="0 0 12 14"><path d="M3.5 1.5 L9.5 7 L3.5 12.5" fill="none" stroke="#cfcfcf" stroke-width="1.4"/></svg>
<div class="a t" style="transform:scaleX(0.9834);left:152px;top:959px;height:30px;line-height:31px;font-size:18px;color:#fff;white-space:nowrap">Content</div>
<div class="a t" style="transform:scaleX(0.9690);left:248px;top:959px;height:30px;line-height:31px;font-size:18px;color:#fff;white-space:nowrap">Dashboard Light</div>
<div class="a" style="left:231px;top:961px;width:1px;height:24px;background:#4a4a4a"></div>
<div class="a" style="left:393px;top:961px;width:1px;height:24px;background:#4a4a4a"></div>
<div class="a" style="left:553px;top:961px;width:1px;height:24px;background:#4a4a4a"></div>
<div class="a" style="left:656px;top:961px;width:1px;height:24px;background:#4a4a4a"></div>
<div class="a" style="left:712px;top:961px;width:1px;height:24px;background:#4a4a4a"></div>
<div class="a" style="left:787px;top:961px;width:1px;height:24px;background:#4a4a4a"></div>
<div class="a" style="left:863px;top:961px;width:1px;height:24px;background:#4a4a4a"></div>
<div class="a" style="left:970px;top:961px;width:1px;height:24px;background:#4a4a4a"></div>
<div class="a" style="left:1146px;top:961px;width:1px;height:24px;background:#4a4a4a"></div>
<div class="a" style="left:1262px;top:961px;width:1px;height:24px;background:#4a4a4a"></div>
<div class="a" style="left:1393px;top:961px;width:1px;height:24px;background:#4a4a4a"></div>
<div class="a" style="left:1509px;top:961px;width:1px;height:24px;background:#4a4a4a"></div>
<div class="a" style="left:399px;top:953px;width:150px;height:35px;border-radius:0 0 5px 5px;background:#fff"></div>
<div class="a t" style="transform:scaleX(0.9766);left:409px;top:955px;height:30px;line-height:31px;font-size:18px;color:#222;white-space:nowrap">Dashboard Dark</div>
<div class="a" style="left:409px;top:982.5px;width:129px;height:2px;background:#1e7a46"></div>
<div class="a" style="left:559px;top:958px;width:92px;height:30px;border-radius:4px;background:#ffff00"></div><div class="a t" style="transform:scaleX(0.9583);left:570px;top:959px;height:30px;line-height:31px;font-size:18px;color:#222;white-space:nowrap">Category</div>
<div class="a" style="left:662px;top:958px;width:45px;height:30px;border-radius:4px;background:#ffff00"></div><div class="a t" style="transform:scaleX(0.9189);left:673px;top:959px;height:30px;line-height:31px;font-size:18px;color:#222;white-space:nowrap">Lot</div>
<div class="a" style="left:718px;top:958px;width:64px;height:30px;border-radius:4px;background:#ffff00"></div><div class="a t" style="transform:scaleX(0.9124);left:729px;top:959px;height:30px;line-height:31px;font-size:18px;color:#222;white-space:nowrap">Stops</div>
<div class="a" style="left:793px;top:958px;width:65px;height:30px;border-radius:4px;background:#ffff00"></div><div class="a t" style="transform:scaleX(0.8955);left:804px;top:959px;height:30px;line-height:31px;font-size:18px;color:#222;white-space:nowrap">Cards</div>
<div class="a" style="left:869px;top:958px;width:96px;height:30px;border-radius:4px;background:#00b050"></div><div class="a t" style="transform:scaleX(0.9608);left:880px;top:959px;height:30px;line-height:31px;font-size:18px;color:#0a2a14;white-space:nowrap">Summary</div>
<div class="a" style="left:975px;top:958px;width:166px;height:30px;border-radius:4px;background:#00b050"></div><div class="a t" style="transform:scaleX(0.9928);left:986px;top:959px;height:30px;line-height:31px;font-size:18px;color:#0a2a14;white-space:nowrap">Monthly Summary</div>
<div class="a" style="left:1153px;top:958px;width:104px;height:30px;border-radius:4px;background:#00a8f0"></div><div class="a t" style="transform:scaleX(0.9530);left:1164px;top:959px;height:30px;line-height:31px;font-size:18px;color:#08283a;white-space:nowrap">Stop Chart</div>
<div class="a" style="left:1269px;top:958px;width:119px;height:30px;border-radius:4px;background:#00a8f0"></div><div class="a t" style="transform:scaleX(0.9598);left:1280px;top:959px;height:30px;line-height:31px;font-size:18px;color:#08283a;white-space:nowrap">Stop Chart 2</div>
<div class="a" style="left:1399px;top:958px;width:105px;height:30px;border-radius:4px;background:#e06060"></div><div class="a t" style="transform:scaleX(0.9428);left:1410px;top:959px;height:30px;line-height:31px;font-size:18px;color:#3a0c0c;white-space:nowrap">Card Chart</div>
<div class="a" style="left:1529px;top:971px;width:2.6px;height:2.6px;border-radius:2px;background:#e0e0e0"></div>
<div class="a" style="left:1533px;top:971px;width:2.6px;height:2.6px;border-radius:2px;background:#e0e0e0"></div>
<div class="a" style="left:1537px;top:971px;width:2.6px;height:2.6px;border-radius:2px;background:#e0e0e0"></div>
<svg class="a" style="left:1566px;top:964px" width="16" height="16" viewBox="0 0 16 16"><path d="M8 1 V15 M1 8 H15" stroke="#f0f0f0" stroke-width="1.5"/></svg>
<div class="a" style="left:1613.7px;top:966.5px;width:2.6px;height:2.6px;border-radius:2px;background:#e0e0e0"></div>
<div class="a" style="left:1613.7px;top:971.5px;width:2.6px;height:2.6px;border-radius:2px;background:#e0e0e0"></div>
<div class="a" style="left:1613.7px;top:976.5px;width:2.6px;height:2.6px;border-radius:2px;background:#e0e0e0"></div>
<div class="a" style="left:1635.6px;top:961.7px;width:261px;height:21px;border-radius:10.5px;background:#151515"></div>
<svg class="a" style="left:1640.5px;top:967px" width="10" height="11" viewBox="0 0 10 11"><path d="M9.2 0.3 V10.7 L0.5 5.5 Z" fill="#9e9e9e"/></svg>
<svg class="a" style="left:1882px;top:967px" width="10" height="11" viewBox="0 0 10 11"><path d="M0.8 0.3 V10.7 L9.5 5.5 Z" fill="#9e9e9e"/></svg>
<div class="a" style="left:1656px;top:967px;width:214px;height:10.8px;border-radius:5.4px;background:#9e9e9e"></div>
<div class="a" style="left:0;top:993px;width:1920px;height:26px;background:#141414;border-top:1px solid #2c2c2c;box-sizing:border-box"></div>
<div class="a t" style="transform:scaleX(0.9436);left:9px;top:994px;height:26px;line-height:27px;font-size:13px;color:#f0f0f0">Prêt</div>
<svg class="a" style="left:56px;top:998px" width="20" height="18" viewBox="0 0 20 18"><path d="M2 1.5 H17.5 V7 M2 1.5 V15.5 H7" fill="none" stroke="#e0e0e0" stroke-width="1.3"/><path d="M2 4.5 H17.5" stroke="#e0e0e0" stroke-width="1.2"/><path d="M4.5 8 H8 M4.5 11.5 H7" stroke="#e0e0e0" stroke-width="1.2"/><circle cx="13" cy="12" r="4.7" fill="none" stroke="#e0e0e0" stroke-width="1.3"/><circle cx="13" cy="12" r="2" fill="#e0e0e0"/></svg>
<svg class="a" style="left:96px;top:997px" width="20" height="20" viewBox="0 0 20 20"><circle cx="9" cy="3.2" r="1.9" fill="none" stroke="#e0e0e0" stroke-width="1.2"/><path d="M1.8 5 Q5 7.5 7 7.5 V11 L4.5 18 M16 4.5 Q13 7.5 11 7.5 V10.5 L12 13 M7 7.5 H11 M9 11.5 L7 14" fill="none" stroke="#e0e0e0" stroke-width="1.2" stroke-linecap="round"/><path d="M11 12 L18 19 M18 12 L11 19" stroke="#e0e0e0" stroke-width="1.2"/></svg>
<div class="a t" style="transform:scaleX(1.0008);left:119px;top:994px;height:26px;line-height:27px;font-size:13px;color:#f0f0f0;white-space:nowrap">Accessibilité : consultez nos recommandations</div>
<svg class="a" style="left:1566px;top:998px" width="18" height="18" viewBox="0 0 18 18"><rect x="1.5" y="1.5" width="15" height="14.5" fill="none" stroke="#e8e8e8" stroke-width="1.4"/><path d="M1.5 6.3 H16.5 M1.5 11.2 H16.5 M6.5 1.5 V16 M11.5 1.5 V16" stroke="#e8e8e8" stroke-width="1.2"/></svg>
<svg class="a" style="left:1617px;top:998px" width="18" height="18" viewBox="0 0 18 18"><rect x="1.5" y="1.5" width="15" height="14.5" fill="none" stroke="#e8e8e8" stroke-width="1.4"/><rect x="4.8" y="4.8" width="8.4" height="8" fill="none" stroke="#e8e8e8" stroke-width="1.1"/><path d="M6.5 7.3 H11.5 M6.5 10 H11.5" stroke="#e8e8e8" stroke-width="1"/></svg>
<div class="a" style="left:1652px;top:994px;width:48px;height:25px;background:#262626"></div>
<svg class="a" style="left:1667px;top:998px" width="18" height="18" viewBox="0 0 18 18"><rect x="1.5" y="1.5" width="15" height="14.5" fill="none" stroke="#e8e8e8" stroke-width="1.4"/><path d="M6.5 1.5 V9.5 H11.5 V1.5" fill="none" stroke="#e8e8e8" stroke-width="1.3"/></svg>
<div class="a" style="left:1708px;top:1006.5px;width:9px;height:1.3px;background:#e0e0e0"></div>
<div class="a" style="left:1724px;top:1006.8px;width:125px;height:1px;background:#8a8a8a"></div>
<div class="a" style="left:1786px;top:1004px;width:1px;height:6px;background:#8a8a8a"></div>
<div class="a" style="left:1744.5px;top:1000px;width:4.5px;height:14px;background:#e0e0e0"></div>
<svg class="a" style="left:1854px;top:1002px" width="10" height="10" viewBox="0 0 10 10"><path d="M5 0.5 V9.5 M0.5 5 H9.5" stroke="#e0e0e0" stroke-width="1.2"/></svg>
<div class="a t " style="left:1881px;top:994.5px;height:26px;line-height:26px;font-size:13px;color:#f0f0f0;">40 %</div>
</body></html>
